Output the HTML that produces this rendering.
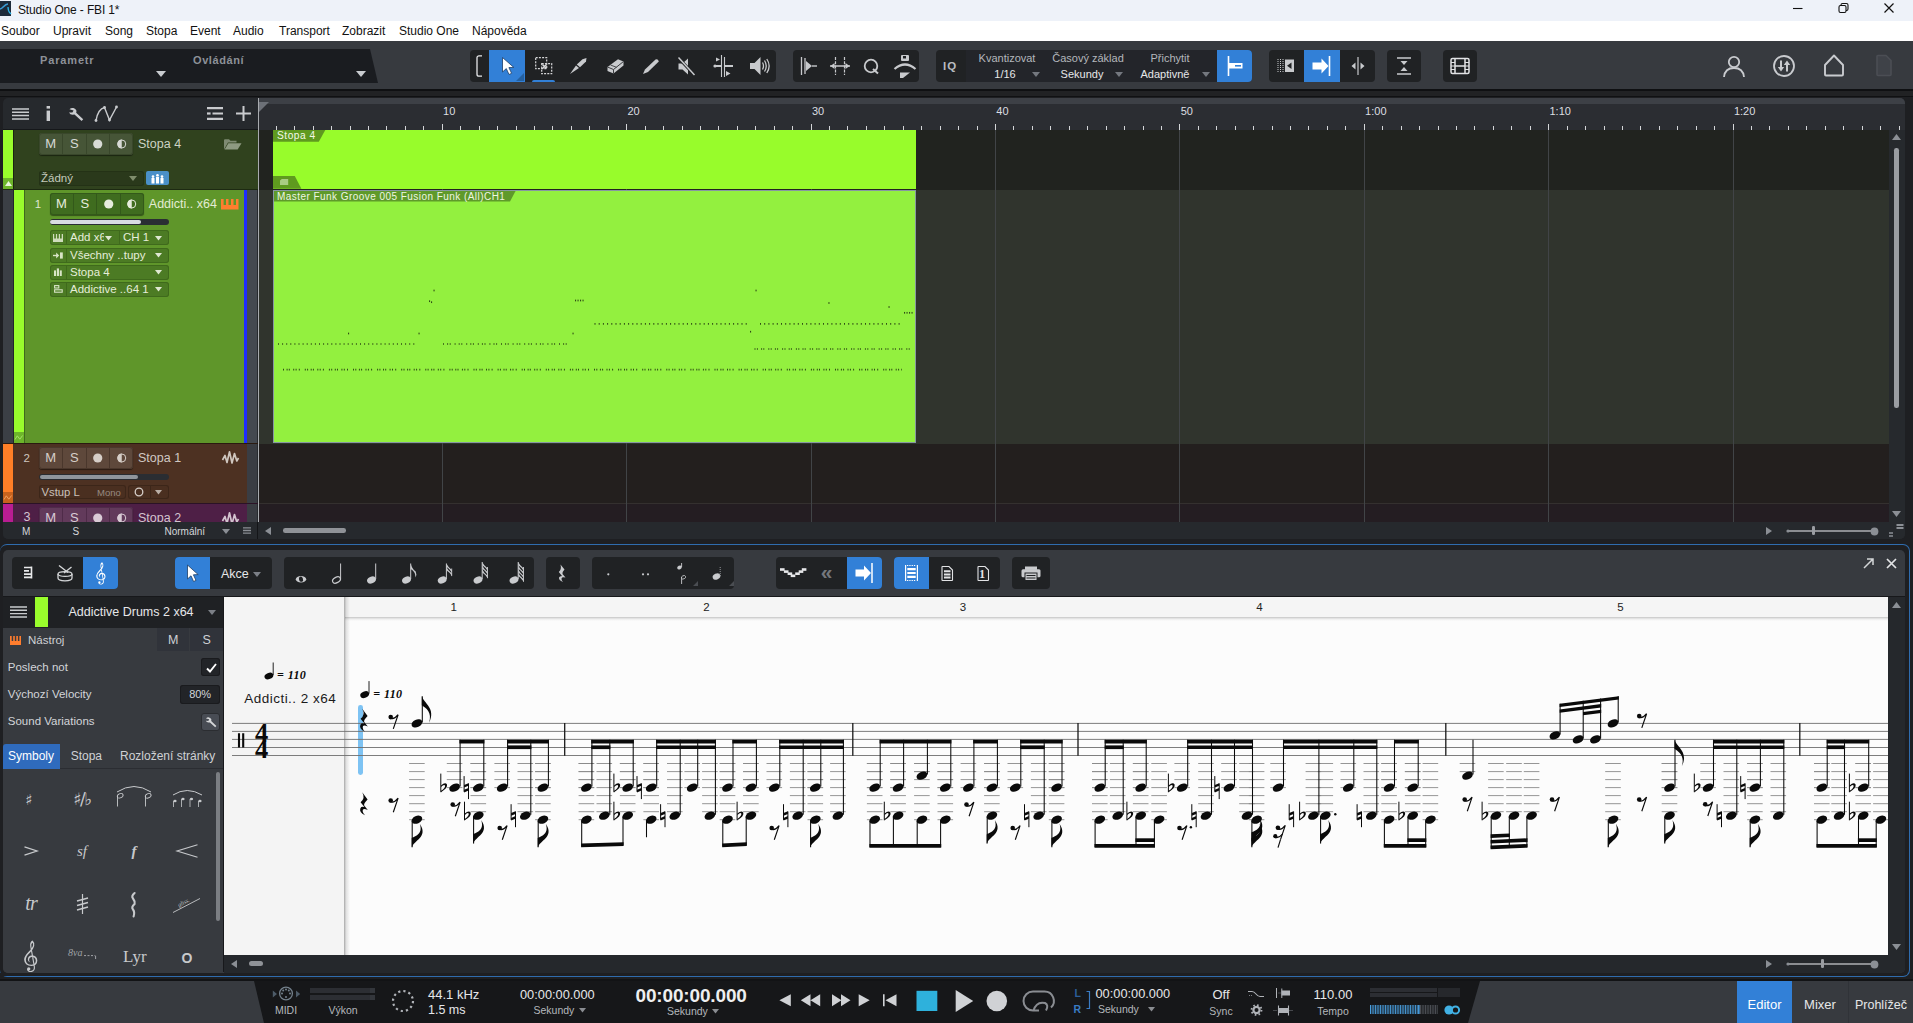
<!DOCTYPE html>
<html lang="cs"><head><meta charset="utf-8"><title>Studio One - FBI 1*</title><style>
*{margin:0;padding:0;box-sizing:border-box}
html,body{width:1913px;height:1023px;overflow:hidden;background:#1e1f22;font-family:"Liberation Sans",sans-serif;}
body{position:relative}
div,svg{position:absolute}
svg{overflow:visible}
.g{background:#202224;border-radius:4px}
.bl{background:#3280d7}
</style></head><body>
<div style="left:0px;top:0px;width:1913px;height:21px;background:#eef2f9;"></div>
<svg style="left:0px;top:1px;" width="12" height="15" viewBox="0 0 12 15"><rect width="11" height="15" fill="#1d2b3a"/><path d="M0 8C3 8 4 3 8 3" stroke="#3a9bd5" stroke-width="1.6" fill="none"/><path d="M8 6C8 11 10 12 11 13" stroke="#2db4e6" stroke-width="1.3" fill="none"/></svg>
<div style="left:18px;top:2px;font-size:12px;color:#111;line-height:14px;white-space:nowrap;line-height:17px;letter-spacing:-.14px">Studio One - FBI 1*</div>
<svg style="left:1785px;top:0px;" width="128" height="20" viewBox="0 0 128 20"><path d="M8 8.5H17.5" stroke="#111" stroke-width="1.1"/><rect x="54" y="5.5" width="7" height="7" rx="1.5" fill="none" stroke="#111" stroke-width="1.1"/><path d="M56 5.5V5A1.5 1.5 0 0 1 57.5 3.5H61.5A1.5 1.5 0 0 1 63 5V9A1.5 1.5 0 0 1 61.5 10.5H61" fill="none" stroke="#111" stroke-width="1.1"/><path d="M99.5 3.5L108.5 12.5M108.5 3.5L99.5 12.5" stroke="#111" stroke-width="1.2"/></svg>
<div style="left:0px;top:21px;width:1913px;height:20px;background:#fff;"></div>
<div style="left:1px;top:23px;font-size:12px;color:#111;line-height:14px;white-space:nowrap;line-height:16px">Soubor</div>
<div style="left:53px;top:23px;font-size:12px;color:#111;line-height:14px;white-space:nowrap;line-height:16px">Upravit</div>
<div style="left:105px;top:23px;font-size:12px;color:#111;line-height:14px;white-space:nowrap;line-height:16px">Song</div>
<div style="left:146px;top:23px;font-size:12px;color:#111;line-height:14px;white-space:nowrap;line-height:16px">Stopa</div>
<div style="left:190px;top:23px;font-size:12px;color:#111;line-height:14px;white-space:nowrap;line-height:16px">Event</div>
<div style="left:233px;top:23px;font-size:12px;color:#111;line-height:14px;white-space:nowrap;line-height:16px">Audio</div>
<div style="left:279px;top:23px;font-size:12px;color:#111;line-height:14px;white-space:nowrap;line-height:16px">Transport</div>
<div style="left:342px;top:23px;font-size:12px;color:#111;line-height:14px;white-space:nowrap;line-height:16px">Zobrazit</div>
<div style="left:399px;top:23px;font-size:12px;color:#111;line-height:14px;white-space:nowrap;line-height:16px">Studio One</div>
<div style="left:472px;top:23px;font-size:12px;color:#111;line-height:14px;white-space:nowrap;line-height:16px">Nápověda</div>
<div style="left:0px;top:41px;width:1913px;height:48px;background:#373a3f;"></div>
<div style="left:0px;top:89px;width:1913px;height:1.6px;background:#0f1012;"></div>
<div style="left:0px;top:90.6px;width:1913px;height:5.6px;background:#212224;"></div>
<div style="left:0px;top:96.2px;width:1913px;height:1.3px;background:#101113;"></div>
<svg style="left:0px;top:49px;" width="380" height="34" viewBox="0 0 380 34"><path d="M0 0H370L378 34H0Z" fill="#1a1c20"/></svg>
<div style="left:40px;top:54px;font-size:11px;color:#8d9198;line-height:13px;white-space:nowrap;font-weight:bold;letter-spacing:.85px">Parametr</div>
<div style="left:193px;top:54px;font-size:11px;color:#8d9198;line-height:13px;white-space:nowrap;font-weight:bold;letter-spacing:.6px">Ovládání</div>
<svg style="left:156px;top:71px;" width="10" height="6" viewBox="0 0 10 6"><path d="M0 0H10L5.0 6Z" fill="#c9ccd0"/></svg>
<svg style="left:356px;top:71px;" width="10" height="6" viewBox="0 0 10 6"><path d="M0 0H10L5.0 6Z" fill="#c9ccd0"/></svg>
<div class="g" style="left:470px;top:50px;width:306px;height:32px;"></div>
<div class="bl" style="left:489px;top:50px;width:36px;height:32px;"></div>
<div style="left:532px;top:80px;width:23px;height:2px;background:#3280d7;border-radius:2px 2px 0 0"></div>
<svg style="left:476px;top:55px;" width="8" height="22" viewBox="0 0 8 22"><path d="M6 .8H3A2 2 0 0 0 1 2.8V19.2A2 2 0 0 0 3 21.2H6" fill="none" stroke="#e6e7e9" stroke-width="1.3"/></svg>
<svg style="left:500px;top:56px;" width="16" height="20" viewBox="0 0 16 20"><path d="M2.5 1.5V16L6.3 12.6L9 18.5L11.6 17.3L8.9 11.6L13.8 11.4Z" fill="#fff" stroke="#1d3d66" stroke-width=".8"/></svg>
<svg style="left:516px;top:73px;" width="8" height="8" viewBox="0 0 8 8"><path d="M8 0V8H0Z" fill="#25609f"/></svg>
<svg style="left:535px;top:57px;" width="18" height="18" viewBox="0 0 18 18"><rect x=".7" y=".7" width="11" height="11" fill="none" stroke="#d6d7d9" stroke-width="1.2" stroke-dasharray="2 1.2"/><rect x="6.7" y="6.7" width="10" height="10" fill="none" stroke="#d6d7d9" stroke-width="1.2" stroke-dasharray="2 1.2"/><path d="M7.5 7.5l4 4m0-4l-4 4" stroke="#d6d7d9" stroke-width="1.6"/></svg>
<svg style="left:569px;top:57px;" width="20" height="18" viewBox="0 0 20 18"><path d="M1 17L7 8.5L10 11Z" fill="#c8cacd"/><path d="M7.8 7.5L13.5 2.2L17.5 1L17 4.5L11 10.2Z" fill="#c8cacd"/></svg>
<svg style="left:606px;top:58px;" width="19" height="17" viewBox="0 0 19 17"><path d="M1.5 9L12 1.2L17.5 3.5L17.5 7.5L7.5 15.5L1.5 13Z" fill="#c8cacd"/><path d="M1.5 9L7.5 11.5L17.5 3.5M7.5 11.5V15.5" stroke="#3b3d40" stroke-width="1" fill="none"/><path d="M4.5 7L10.5 9.3" stroke="#3b3d40" stroke-width=".9"/></svg>
<svg style="left:642px;top:58px;" width="18" height="17" viewBox="0 0 18 17"><path d="M1 16L3 11.5L13.5 1.5Q16 0.5 16.8 3.5L6 14Z" fill="#c8cacd"/></svg>
<svg style="left:677px;top:57px;" width="20" height="19" viewBox="0 0 20 19"><path d="M1.5 6.5H5.5L11 1.5V17.5L5.5 12.5H1.5Z" fill="#c8cacd"/><path d="M1 0.5L18 18.5" stroke="#202224" stroke-width="3"/><path d="M1.5 0.5L17.5 18" stroke="#c8cacd" stroke-width="1.5"/></svg>
<svg style="left:712px;top:55px;" width="22" height="22" viewBox="0 0 22 22"><path d="M9.5 0V22M12.5 2V22" stroke="#c8cacd" stroke-width="1.1"/><path d="M2 11H9M13 11H21" stroke="#c8cacd" stroke-width="2"/><circle cx="3" cy="11" r="1.6" fill="#c8cacd"/><path d="M4 2.5L8 4.5L4 6.5Z M14 16L18.5 18.5L14 21Z" fill="#c8cacd"/></svg>
<svg style="left:749px;top:56px;" width="22" height="20" viewBox="0 0 22 20"><path d="M1 7H5.5L11.5 1V19L5.5 13H1Z" fill="#c8cacd"/><path d="M13.5 6.5Q15.5 10 13.5 13.5M15.5 4.5Q19 10 15.5 15.5M17.8 3Q22.5 10 17.8 17" stroke="#c8cacd" stroke-width="1.3" fill="none"/></svg>
<div class="g" style="left:793px;top:50px;width:126px;height:32px;"></div>
<svg style="left:800px;top:57px;" width="18" height="18" viewBox="0 0 18 18"><path d="M1.5 0V18M5 1V17" stroke="#c8cacd" stroke-width="1.3"/><path d="M6 4L12 9L6 14Z" fill="#c8cacd"/><path d="M12 9H17" stroke="#c8cacd" stroke-width="1.4"/></svg>
<svg style="left:830px;top:57px;" width="20" height="18" viewBox="0 0 20 18"><path d="M5.5 0V18M14.5 0V18" stroke="#c8cacd" stroke-width="1.2" stroke-dasharray="3 1.2"/><path d="M0 9H20" stroke="#c8cacd" stroke-width="1.5"/><path d="M4.5 6L0.5 9L4.5 12ZM15.5 6L19.5 9L15.5 12Z" fill="#c8cacd"/></svg>
<svg style="left:863px;top:57px;" width="18" height="18" viewBox="0 0 18 18"><circle cx="8" cy="9" r="6.3" fill="none" stroke="#c8cacd" stroke-width="1.8"/><path d="M10 12L15 16.5" stroke="#c8cacd" stroke-width="2"/></svg>
<svg style="left:893px;top:54px;" width="24" height="26" viewBox="0 0 24 26"><rect x="8" y="1" width="8" height="6" rx="1" fill="#c8cacd"/><rect x="10" y="2" width="3" height="2.5" fill="#202224"/><path d="M1.5 15Q12 6 22.5 15" stroke="#c8cacd" stroke-width="2.2" fill="none"/><path d="M7 18.5H17L10 24H7Z" fill="#c8cacd"/></svg>
<div class="g" style="left:936px;top:50px;width:316px;height:32px;"></div>
<div style="left:966px;top:50px;width:251px;height:32px;background:#23252a;"></div>
<div style="left:943px;top:59.5px;font-size:11.5px;color:#b9bcc1;line-height:13.5px;white-space:nowrap;letter-spacing:1px;font-weight:bold">IQ</div>
<div style="left:957px;top:51px;font-size:11px;color:#b4b7bc;line-height:13px;white-space:nowrap;width:100px;text-align:center;line-height:14px">Kvantizovat</div>
<div style="left:1038px;top:51px;font-size:11px;color:#b4b7bc;line-height:13px;white-space:nowrap;width:100px;text-align:center;line-height:14px">Časový základ</div>
<div style="left:1120px;top:51px;font-size:11px;color:#b4b7bc;line-height:13px;white-space:nowrap;width:100px;text-align:center;line-height:14px">Přichytit</div>
<div style="left:980px;top:67px;font-size:11px;color:#e6e7e9;line-height:13px;white-space:nowrap;width:50px;text-align:center;line-height:14px">1/16</div>
<div style="left:1052px;top:67px;font-size:11px;color:#e6e7e9;line-height:13px;white-space:nowrap;width:60px;text-align:center;line-height:14px">Sekundy</div>
<div style="left:1130px;top:67px;font-size:11px;color:#e6e7e9;line-height:13px;white-space:nowrap;width:70px;text-align:center;line-height:14px">Adaptivně</div>
<svg style="left:1032px;top:72px;" width="8" height="5" viewBox="0 0 8 5"><path d="M0 0H8L4.0 5Z" fill="#74787f"/></svg>
<svg style="left:1115px;top:72px;" width="8" height="5" viewBox="0 0 8 5"><path d="M0 0H8L4.0 5Z" fill="#74787f"/></svg>
<svg style="left:1202px;top:72px;" width="8" height="5" viewBox="0 0 8 5"><path d="M0 0H8L4.0 5Z" fill="#74787f"/></svg>
<div style="left:1217px;top:50px;width:35px;height:32px;background:#3280d7;border-radius:0 4px 4px 0"></div>
<svg style="left:1226px;top:56px;" width="18" height="20" viewBox="0 0 18 20"><path d="M2.5 0V20" stroke="#fff" stroke-width="1.6"/><rect x="3" y="7" width="13.5" height="5.5" fill="#fff"/><rect x="9" y="9" width="6" height="1.6" fill="#3280d7"/></svg>
<div class="g" style="left:1269px;top:50px;width:106px;height:32px;"></div>
<div class="bl" style="left:1304px;top:50px;width:36px;height:32px;"></div>
<svg style="left:1277px;top:59px;" width="18" height="14" viewBox="0 0 18 14"><path d="M1 0V14M3.5 0V14M6 0V14" stroke="#c8cacd" stroke-width="1" stroke-dasharray="1 1"/><rect x="8" y="0.5" width="9" height="12.5" fill="#c8cacd"/><path d="M14.5 3.5V10L10 6.7Z" fill="#202224"/></svg>
<svg style="left:1312px;top:56px;" width="20" height="20" viewBox="0 0 20 20"><path d="M17.5 0V20" stroke="#fff" stroke-width="1.6"/><path d="M0.5 6.5H9.5V2.5L16.5 10L9.5 17.5V13.5H0.5Z" fill="#fff"/></svg>
<svg style="left:1349px;top:57px;" width="18" height="18" viewBox="0 0 18 18"><path d="M9 0V18" stroke="#c8cacd" stroke-width="1.2"/><path d="M6.5 5.5L2.5 9L6.5 12.5ZM11.5 5.5L15.5 9L11.5 12.5Z" fill="#c8cacd"/></svg>
<div class="g" style="left:1387px;top:50px;width:34px;height:32px;"></div>
<svg style="left:1396px;top:57px;" width="16" height="18" viewBox="0 0 16 18"><path d="M1 1H15M1 17H15" stroke="#c8cacd" stroke-width="1.3"/><path d="M4.5 4H11.5L8 8ZM4.5 14H11.5L8 10Z" fill="#c8cacd"/></svg>
<div class="g" style="left:1443px;top:50px;width:34px;height:32px;"></div>
<svg style="left:1450px;top:57px;" width="20" height="18" viewBox="0 0 20 18"><rect x="1" y="1.5" width="18" height="15" rx="1.5" fill="none" stroke="#e2e3e5" stroke-width="1.5"/><path d="M5 1.5V16.5M15 1.5V16.5M5 9H15" stroke="#e2e3e5" stroke-width="1.5"/><path d="M1 5.5H5M1 9H5M1 12.5H5M15 5.5H19M15 9H19M15 12.5H19" stroke="#e2e3e5" stroke-width="1"/></svg>
<svg style="left:1722px;top:54px;" width="24" height="24" viewBox="0 0 24 24"><circle cx="12" cy="8" r="5.2" fill="none" stroke="#c9cbcf" stroke-width="1.8"/><path d="M2 23Q3 14 12 14Q21 14 22 23" fill="none" stroke="#c9cbcf" stroke-width="1.8"/></svg>
<svg style="left:1772px;top:54px;" width="24" height="24" viewBox="0 0 24 24"><circle cx="12" cy="12" r="10" fill="none" stroke="#c9cbcf" stroke-width="1.8"/><path d="M9 6.5V16M15 17.5V8" stroke="#c9cbcf" stroke-width="2"/><path d="M5.8 13H12.2L9 17.5ZM11.8 11H18.2L15 6.5Z" fill="#c9cbcf"/></svg>
<svg style="left:1823px;top:54px;" width="22" height="24" viewBox="0 0 22 24"><path d="M2 11L11 1.5L20 11V20.5A1 1 0 0 1 19 21.5H3A1 1 0 0 1 2 20.5Z" fill="none" stroke="#c9cbcf" stroke-width="1.9" stroke-linejoin="round"/></svg>
<svg style="left:1875px;top:54px;" width="18" height="24" viewBox="0 0 18 24"><path d="M2 2.5A1 1 0 0 1 3 1.5H11L16 6.5V20.5A1 1 0 0 1 15 21.5H3A1 1 0 0 1 2 20.5Z" fill="#3f4248" stroke="#4b4e54" stroke-width="1.6"/></svg>
<div style="left:3px;top:97.5px;width:1902px;height:441.5px;background:#26292d;border-radius:5px"></div>
<svg style="left:12px;top:108px;" width="17" height="12" viewBox="0 0 17 12"><path d="M0 1H17M0 4.3H17M0 7.6H17M0 11H17" stroke="#c9cbce" stroke-width="1.5"/></svg>
<svg style="left:46px;top:106px;" width="5" height="15" viewBox="0 0 5 15"><rect x="0.6" y="0" width="3.4" height="2.6" fill="#c9cbce"/><rect x="0.6" y="4.6" width="3.4" height="10.4" fill="#c9cbce"/></svg>
<svg style="left:68px;top:106px;" width="16" height="16" viewBox="0 0 16 16"><path d="M1.5 3.2A4.3 4.3 0 0 1 8.5 4.8L8.2 6.8L15.2 13.2L13.6 15L6.5 8.6L4.6 8.8A4.3 4.3 0 0 1 1 6.4L4.4 6.6L5.6 4.4Z" fill="#c9cbce"/></svg>
<svg style="left:94px;top:105px;" width="26" height="17" viewBox="0 0 26 17"><path d="M2 15.5Q4 4 10.5 2.5L15.5 15L22.5 2" fill="none" stroke="#c9cbce" stroke-width="1.4"/><circle cx="2" cy="15.5" r="1.4" fill="#c9cbce"/><circle cx="10.5" cy="2.5" r="1.4" fill="#c9cbce"/><circle cx="15.5" cy="15" r="1.4" fill="#c9cbce"/><circle cx="22.5" cy="2" r="1.4" fill="#c9cbce"/></svg>
<svg style="left:207px;top:107px;" width="16" height="13" viewBox="0 0 16 13"><path d="M0 1.2H16M5.5 6.5H16M0 11.8H16" stroke="#c9cbce" stroke-width="2.2"/><path d="M0 6.5H3.6" stroke="#c9cbce" stroke-width="2.2"/></svg>
<svg style="left:236px;top:106px;" width="15" height="15" viewBox="0 0 15 15"><path d="M7.5 0V15M0 7.5H15" stroke="#c9cbce" stroke-width="2"/></svg>
<div style="left:3px;top:128.5px;width:254.5px;height:1.2px;background:#15171a;"></div>
<div style="left:13px;top:129.7px;width:244.5px;height:59.6px;background:#30421e;"></div>
<div style="left:3px;top:129.7px;width:10.2px;height:48px;background:#99fd2c;"></div>
<div style="left:3px;top:177.5px;width:10.2px;height:11.8px;background:#6db52a;"></div>
<svg style="left:4.5px;top:181px;" width="7" height="5" viewBox="0 0 7 5"><path d="M0 5L3.5 0L7 5Z" fill="#e8f5d8"/></svg>
<div style="left:39px;top:133px;width:94px;height:22px;background:#465537;border-radius:3px;box-shadow:0 1px 1px rgba(0,0,0,.45), inset 0 0 0 1px #39472b"><div style="left:23.0px;top:1px;width:1px;height:20px;background:#39472b"></div><div style="left:46.5px;top:1px;width:1px;height:20px;background:#39472b"></div><div style="left:70.0px;top:1px;width:1px;height:20px;background:#39472b"></div><div style="left:0;top:3px;width:23.5px;text-align:center;font-size:13px;line-height:16px;color:#d8dad6">M</div><div style="left:23.5px;top:3px;width:23.5px;text-align:center;font-size:13px;line-height:16px;color:#d8dad6">S</div><svg style="left:47.0px;top:0" width="23.5" height="22"><circle cx="11.75" cy="11.0" r="4.6" fill="#d8dad6"/></svg><svg style="left:70.5px;top:0" width="23.5" height="22"><circle cx="11.75" cy="11.0" r="4" fill="none" stroke="#d8dad6" stroke-width="1"/><path d="M11.75 6.5A4.5 4.5 0 0 0 11.75 15.5Z" fill="#d8dad6"/></svg></div>
<div style="left:138px;top:136px;font-size:12.5px;color:#ccd2c4;line-height:14.5px;white-space:nowrap;line-height:16px">Stopa 4</div>
<svg style="left:224px;top:139px;" width="18" height="11" viewBox="0 0 18 11"><path d="M0 10.5V1.2Q0 0.3 1 0.3H5L6.5 1.8H12.5V3.5H4L0 10.5Z" fill="#7e8a72"/><path d="M4.4 4.2H17.5L13.6 10.6H0.6Z" fill="#8e9a82"/></svg>
<div style="left:38.5px;top:170.5px;width:105px;height:15px;background:#2a391b;border-radius:3px;box-shadow:inset 0 0 0 1px #243216"></div>
<div style="left:41px;top:170.5px;font-size:11.5px;color:#c3c9bb;line-height:13.5px;white-space:nowrap;line-height:15px">Žádný</div>
<svg style="left:129px;top:176px;" width="8" height="5" viewBox="0 0 8 5"><path d="M0 0H8L4.0 5Z" fill="#7f8d6c"/></svg>
<div style="left:146px;top:171px;width:22.5px;height:14px;background:#4a90c8;border-radius:2px"></div>
<svg style="left:150.5px;top:173.5px;" width="13" height="9.5" viewBox="0 0 13 9.5"><circle cx="2" cy="2.6" r="1.3" fill="#fff"/><rect x=".5" y="4" width="3" height="5.5" fill="#fff"/><circle cx="6.5" cy="1.3" r="1.3" fill="#fff"/><rect x="5" y="2.8" width="3" height="6.7" fill="#fff"/><circle cx="11" cy="2.6" r="1.3" fill="#fff"/><rect x="9.5" y="4" width="3" height="5.5" fill="#fff"/></svg>
<div style="left:3px;top:189.2px;width:254.5px;height:1px;background:#1d2a12;"></div>
<div style="left:13px;top:129.7px;width:0.9px;height:59.5px;background:#1a2410;"></div>
<div style="left:3px;top:190px;width:11px;height:253px;background:#3b3f45;"></div>
<div style="left:14px;top:190px;width:10.3px;height:253px;background:#99fd2c;"></div>
<div style="left:14px;top:432px;width:10.3px;height:11px;background:#6db52a;"></div>
<svg style="left:15px;top:435px;" width="8" height="5" viewBox="0 0 8 5"><path d="M0 4.5L2.3 0.8L4.8 4.2L7.6 0.5" fill="none" stroke="#a5e06a" stroke-width="1"/></svg>
<div style="left:24.3px;top:190px;width:220px;height:253px;background:#5f962a;"></div>
<div style="left:24.1px;top:190px;width:0.9px;height:253px;background:#3f6a1c;"></div>
<div style="left:13.2px;top:190px;width:0.9px;height:253px;background:#23262a;"></div>
<div style="left:244.2px;top:190px;width:2.9px;height:253px;background:#1c2cff;"></div>
<div style="left:247.1px;top:190px;width:10.4px;height:253px;background:#444950;"></div>
<div style="left:34.8px;top:195.5px;font-size:11.5px;color:#dfe8d2;line-height:13.5px;white-space:nowrap;line-height:16px">1</div>
<div style="left:49.6px;top:192.5px;width:94px;height:22px;background:#3f6c1f;border-radius:3px;box-shadow:0 1px 1px rgba(0,0,0,.45), inset 0 0 0 1px #33591a"><div style="left:23.0px;top:1px;width:1px;height:20px;background:#33591a"></div><div style="left:46.5px;top:1px;width:1px;height:20px;background:#33591a"></div><div style="left:70.0px;top:1px;width:1px;height:20px;background:#33591a"></div><div style="left:0;top:3px;width:23.5px;text-align:center;font-size:13px;line-height:16px;color:#e6ecdd">M</div><div style="left:23.5px;top:3px;width:23.5px;text-align:center;font-size:13px;line-height:16px;color:#e6ecdd">S</div><svg style="left:47.0px;top:0" width="23.5" height="22"><circle cx="11.75" cy="11.0" r="4.6" fill="#e6ecdd"/></svg><svg style="left:70.5px;top:0" width="23.5" height="22"><circle cx="11.75" cy="11.0" r="4" fill="none" stroke="#e6ecdd" stroke-width="1"/><path d="M11.75 6.5A4.5 4.5 0 0 0 11.75 15.5Z" fill="#e6ecdd"/></svg></div>
<div style="left:148.8px;top:195.5px;font-size:12.5px;color:#e3ecd4;line-height:14.5px;white-space:nowrap;line-height:16px">Addicti.. x64</div>
<svg style="left:221px;top:199px;" width="17.5" height="10.5" viewBox="0 0 17.5 10.5"><path d="M0 0H2.6V6H5V0H7.5V6H10V0H12.5V6H15V0H17.5V10.5H0Z" fill="#ff7d2e"/></svg>
<div style="left:49.6px;top:219.2px;width:119.6px;height:5.8px;background:#2a2e33;border-radius:3px"></div>
<div style="left:50.4px;top:220px;width:91px;height:4.2px;background:#d9dde1;border-radius:2.2px"></div>
<div style="left:49.6px;top:230.3px;width:119.6px;height:15px;background:#4c7b24;border-radius:3px;box-shadow:inset 0 0 0 1px #3f6a1c"></div>
<div style="left:66px;top:231.3px;width:1px;height:13px;background:#3f6a1c;"></div>
<div style="left:70px;top:230.3px;width:38px;height:15px;overflow:hidden"><div style="left:0;top:0;font-size:11.5px;line-height:15px;color:#e6eeda;white-space:nowrap">Add x6</div></div>
<div style="left:104px;top:231.3px;width:5px;height:13px;background:#4c7b24;"></div>
<div style="left:118.6px;top:231.3px;width:1px;height:13px;background:#3f6a1c;"></div>
<div style="left:123px;top:230.3px;font-size:11.5px;color:#e6eeda;line-height:13.5px;white-space:nowrap;line-height:15px">CH 1</div>
<svg style="left:104.5px;top:235.8px;" width="7" height="4.5" viewBox="0 0 7 4.5"><path d="M0 0H7L3.5 4.5Z" fill="#dfe8d2"/></svg>
<svg style="left:154.5px;top:235.8px;" width="7" height="4.5" viewBox="0 0 7 4.5"><path d="M0 0H7L3.5 4.5Z" fill="#dfe8d2"/></svg>
<div style="left:49.6px;top:247.5px;width:119.6px;height:15px;background:#4c7b24;border-radius:3px;box-shadow:inset 0 0 0 1px #3f6a1c"></div>
<div style="left:66px;top:248.5px;width:1px;height:13px;background:#3f6a1c;"></div>
<div style="left:70px;top:247.5px;font-size:11.5px;color:#e6eeda;line-height:13.5px;white-space:nowrap;line-height:15px">Všechny ..tupy</div>
<svg style="left:154.5px;top:253.0px;" width="7" height="4.5" viewBox="0 0 7 4.5"><path d="M0 0H7L3.5 4.5Z" fill="#dfe8d2"/></svg>
<div style="left:49.6px;top:264.7px;width:119.6px;height:15px;background:#4c7b24;border-radius:3px;box-shadow:inset 0 0 0 1px #3f6a1c"></div>
<div style="left:66px;top:265.7px;width:1px;height:13px;background:#3f6a1c;"></div>
<div style="left:70px;top:264.7px;font-size:11.5px;color:#e6eeda;line-height:13.5px;white-space:nowrap;line-height:15px">Stopa 4</div>
<svg style="left:154.5px;top:270.2px;" width="7" height="4.5" viewBox="0 0 7 4.5"><path d="M0 0H7L3.5 4.5Z" fill="#dfe8d2"/></svg>
<div style="left:49.6px;top:281.8px;width:119.6px;height:15px;background:#4c7b24;border-radius:3px;box-shadow:inset 0 0 0 1px #3f6a1c"></div>
<div style="left:66px;top:282.8px;width:1px;height:13px;background:#3f6a1c;"></div>
<div style="left:70px;top:281.8px;font-size:11.5px;color:#e6eeda;line-height:13.5px;white-space:nowrap;line-height:15px">Addictive ..64 1</div>
<svg style="left:154.5px;top:287.3px;" width="7" height="4.5" viewBox="0 0 7 4.5"><path d="M0 0H7L3.5 4.5Z" fill="#dfe8d2"/></svg>
<svg style="left:53px;top:233.5px;" width="10" height="8" viewBox="0 0 10 8"><path d="M0 8V0H1.2V4.6H2.9V0H4.1V4.6H5.8V0H7V4.6H8.7V0H10V8Z" fill="#cfdcbc"/></svg>
<svg style="left:53px;top:251.5px;" width="10" height="7" viewBox="0 0 10 7"><path d="M0 3.5H4.5" stroke="#d8e4c6" stroke-width="1.4"/><path d="M3.2 0.6L6.2 3.5L3.2 6.4Z" fill="#d8e4c6"/><rect x="7" y="0.4" width="2.8" height="6.2" fill="#d8e4c6"/></svg>
<svg style="left:54px;top:267.5px;" width="8" height="8" viewBox="0 0 8 8"><rect x="0" y="2.4" width="2" height="5.6" fill="#d8e4c6"/><rect x="2.8" y="0.4" width="2.2" height="7.6" fill="#d8e4c6"/><rect x="5.8" y="2.4" width="2" height="5.6" fill="#d8e4c6"/></svg>
<svg style="left:54px;top:285px;" width="9" height="8" viewBox="0 0 9 8"><rect x=".6" y=".6" width="4.2" height="2.4" fill="none" stroke="#d8e4c6" stroke-width="1.1"/><rect x=".6" y="4.8" width="7.6" height="2.4" fill="none" stroke="#d8e4c6" stroke-width="1.1"/></svg>
<div style="left:3px;top:443.3px;width:254.5px;height:1px;background:#2a1a10;"></div>
<div style="left:13px;top:444px;width:234.5px;height:59.3px;background:#4d3122;"></div>
<div style="left:247.3px;top:444px;width:10.2px;height:59.3px;background:#3a3d43;"></div>
<div style="left:3px;top:444px;width:10.2px;height:48px;background:#ff7f27;"></div>
<div style="left:3px;top:491.6px;width:10.2px;height:11.7px;background:#c8621d;"></div>
<svg style="left:4px;top:495px;" width="8" height="5" viewBox="0 0 8 5"><path d="M0 4.5L2.3 0.8L4.8 4.2L7.6 0.5" fill="none" stroke="#f0a060" stroke-width="1"/></svg>
<div style="left:23.5px;top:449.5px;font-size:11.5px;color:#cfc6bf;line-height:13.5px;white-space:nowrap;line-height:16px">2</div>
<div style="left:39px;top:446.5px;width:94px;height:22px;background:#5e483b;border-radius:3px;box-shadow:0 1px 1px rgba(0,0,0,.45), inset 0 0 0 1px #4a372c"><div style="left:23.0px;top:1px;width:1px;height:20px;background:#4a372c"></div><div style="left:46.5px;top:1px;width:1px;height:20px;background:#4a372c"></div><div style="left:70.0px;top:1px;width:1px;height:20px;background:#4a372c"></div><div style="left:0;top:3px;width:23.5px;text-align:center;font-size:13px;line-height:16px;color:#d6cec8">M</div><div style="left:23.5px;top:3px;width:23.5px;text-align:center;font-size:13px;line-height:16px;color:#d6cec8">S</div><svg style="left:47.0px;top:0" width="23.5" height="22"><circle cx="11.75" cy="11.0" r="4.6" fill="#d6cec8"/></svg><svg style="left:70.5px;top:0" width="23.5" height="22"><circle cx="11.75" cy="11.0" r="4" fill="none" stroke="#d6cec8" stroke-width="1"/><path d="M11.75 6.5A4.5 4.5 0 0 0 11.75 15.5Z" fill="#d6cec8"/></svg></div>
<div style="left:138px;top:449.5px;font-size:12.5px;color:#d0c8c2;line-height:14.5px;white-space:nowrap;line-height:16px">Stopa 1</div>
<svg style="left:221.5px;top:451px;" width="17" height="13" viewBox="0 0 17 13"><path d="M0.5 9L3 4.5L5 11.5L7.5 0.8L10 12L12.5 2.5L14.8 10L16.5 7" fill="none" stroke="#cfc6bf" stroke-width="1.7" stroke-linejoin="round"/></svg>
<div style="left:39px;top:474.3px;width:130px;height:5.6px;background:#2a2d32;border-radius:3px"></div>
<div style="left:39.8px;top:475.1px;width:98px;height:4px;background:#8f959c;border-radius:2px"></div>
<div style="left:39px;top:484.6px;width:86.6px;height:14.8px;background:#4a2f20;border-radius:3px;box-shadow:inset 0 0 0 1px #3c2619"></div>
<div style="left:41.5px;top:484.6px;font-size:11.3px;color:#c9c0ba;line-height:13.3px;white-space:nowrap;line-height:15px">Vstup L</div>
<div style="left:97px;top:485.6px;font-size:9.5px;color:#978a80;line-height:11.5px;white-space:nowrap;line-height:13px">Mono</div>
<div style="left:127.8px;top:484.6px;width:41.2px;height:14.8px;background:#4a2f20;border-radius:3px;box-shadow:inset 0 0 0 1px #3c2619"></div>
<div style="left:150.3px;top:485.6px;width:1px;height:12.8px;background:#3c2619;"></div>
<svg style="left:134px;top:487px;" width="10" height="10" viewBox="0 0 10 10"><circle cx="5" cy="5" r="3.8" fill="none" stroke="#d6cec8" stroke-width="1.3"/></svg>
<svg style="left:154.5px;top:490px;" width="7" height="4.5" viewBox="0 0 7 4.5"><path d="M0 0H7L3.5 4.5Z" fill="#b9aea6"/></svg>
<div style="left:3px;top:503.3px;width:254.5px;height:1px;background:#2b1226;"></div>
<div style="left:13px;top:504.2px;width:234.5px;height:18px;background:#4e1f46;"></div>
<div style="left:247.3px;top:504.2px;width:10.2px;height:18px;background:#3a3d43;"></div>
<div style="left:3px;top:504.2px;width:10.2px;height:18px;background:#b91d92;"></div>
<div style="left:13px;top:504.2px;width:244.5px;height:18px;overflow:hidden"><div style="left:10.5px;top:5px;font-size:12.5px;line-height:16px;color:#d3c3cf">3</div><div style="left:26px;top:3px;width:94px;height:22px;background:#623a5b;border-radius:3px;box-shadow:0 1px 1px rgba(0,0,0,.45), inset 0 0 0 1px #4f2b49"><div style="left:23.0px;top:1px;width:1px;height:20px;background:#4f2b49"></div><div style="left:46.5px;top:1px;width:1px;height:20px;background:#4f2b49"></div><div style="left:70.0px;top:1px;width:1px;height:20px;background:#4f2b49"></div><div style="left:0;top:3px;width:23.5px;text-align:center;font-size:13px;line-height:16px;color:#d9cbd5">M</div><div style="left:23.5px;top:3px;width:23.5px;text-align:center;font-size:13px;line-height:16px;color:#d9cbd5">S</div><svg style="left:47.0px;top:0" width="23.5" height="22"><circle cx="11.75" cy="11.0" r="4.6" fill="#d9cbd5"/></svg><svg style="left:70.5px;top:0" width="23.5" height="22"><circle cx="11.75" cy="11.0" r="4" fill="none" stroke="#d9cbd5" stroke-width="1"/><path d="M11.75 6.5A4.5 4.5 0 0 0 11.75 15.5Z" fill="#d9cbd5"/></svg></div><div style="left:125px;top:6px;font-size:12.5px;line-height:16px;color:#d3c3cf;white-space:nowrap">Stopa 2</div><svg style="left:208.5px;top:7.5px;" width="17" height="13" viewBox="0 0 17 13"><path d="M0.5 9L3 4.5L5 11.5L7.5 0.8L10 12L12.5 2.5L14.8 10L16.5 7" fill="none" stroke="#d3c3cf" stroke-width="1.7" stroke-linejoin="round"/></svg></div>
<div style="left:3px;top:522.2px;width:254.5px;height:17px;background:#26292d;border-radius:0 0 0 5px"></div>
<div style="left:257.2px;top:522.2px;width:1px;height:16.8px;background:#141518;"></div>
<div style="left:22px;top:525px;font-size:10px;color:#d5d7da;line-height:12px;white-space:nowrap;line-height:13px">M</div>
<div style="left:72.5px;top:525px;font-size:10px;color:#d5d7da;line-height:12px;white-space:nowrap;line-height:13px">S</div>
<div style="left:164.5px;top:524.5px;font-size:10px;color:#d5d7da;line-height:12px;white-space:nowrap;line-height:13px">Normální</div>
<svg style="left:222px;top:529px;" width="8" height="5" viewBox="0 0 8 5"><path d="M0 0H8L4.0 5Z" fill="#8a8e94"/></svg>
<svg style="left:243px;top:526.5px;" width="8" height="7" viewBox="0 0 8 7"><path d="M0 .8H8M0 3.5H8M0 6.2H8" stroke="#8a8e94" stroke-width="1.3"/></svg>
<div style="left:257.7px;top:97.5px;width:1.5px;height:424.7px;background:#a8abaf;"></div>
<div style="left:259.2px;top:97.5px;width:1645.8px;height:6.5px;background:#3d4046;border-radius:0 5px 0 0"></div>
<div style="left:259.2px;top:104px;width:1645.8px;height:25.5px;background:#2b2d32;"></div>
<svg style="left:259.3px;top:102.3px;" width="10" height="10" viewBox="0 0 10 10"><path d="M0 0H10L0 10Z" fill="#6c7077"/></svg>
<svg style="left:0px;top:0px;" width="1913" height="130" viewBox="0 0 1913 130"><path d="M276.5 126V130M294.5 126V130M313.5 126V130M331.5 126V130M350.5 126V130M368.5 126V130M386.5 126V130M405.5 126V130M423.5 126V130M442.5 124V130M460.5 126V130M479.5 126V130M497.5 126V130M516.5 126V130M534.5 126V130M552.5 126V130M571.5 126V130M589.5 126V130M608.5 126V130M626.5 124V130M645.5 126V130M663.5 126V130M682.5 126V130M700.5 126V130M718.5 126V130M737.5 126V130M755.5 126V130M774.5 126V130M792.5 126V130M811.5 124V130M829.5 126V130M847.5 126V130M866.5 126V130M884.5 126V130M903.5 126V130M921.5 126V130M940.5 126V130M958.5 126V130M977.5 126V130M995.5 124V130M1013.5 126V130M1032.5 126V130M1050.5 126V130M1069.5 126V130M1087.5 126V130M1106.5 126V130M1124.5 126V130M1143.5 126V130M1161.5 126V130M1179.5 124V130M1198.5 126V130M1216.5 126V130M1235.5 126V130M1253.5 126V130M1272.5 126V130M1290.5 126V130M1308.5 126V130M1327.5 126V130M1345.5 126V130M1364.5 124V130M1382.5 126V130M1401.5 126V130M1419.5 126V130M1438.5 126V130M1456.5 126V130M1474.5 126V130M1493.5 126V130M1511.5 126V130M1530.5 126V130M1548.5 124V130M1567.5 126V130M1585.5 126V130M1604.5 126V130M1622.5 126V130M1640.5 126V130M1659.5 126V130M1677.5 126V130M1696.5 126V130M1714.5 126V130M1733.5 124V130M1751.5 126V130M1769.5 126V130M1788.5 126V130M1806.5 126V130M1825.5 126V130M1843.5 126V130M1862.5 126V130M1880.5 126V130M1899.5 126V130" stroke="#d4d6d8" stroke-width="1"/></svg>
<div style="left:443.09999999999997px;top:104.5px;font-size:11px;color:#dcdee1;line-height:13px;white-space:nowrap;line-height:13px">10</div>
<div style="left:627.5px;top:104.5px;font-size:11px;color:#dcdee1;line-height:13px;white-space:nowrap;line-height:13px">20</div>
<div style="left:811.9px;top:104.5px;font-size:11px;color:#dcdee1;line-height:13px;white-space:nowrap;line-height:13px">30</div>
<div style="left:996.3px;top:104.5px;font-size:11px;color:#dcdee1;line-height:13px;white-space:nowrap;line-height:13px">40</div>
<div style="left:1180.7px;top:104.5px;font-size:11px;color:#dcdee1;line-height:13px;white-space:nowrap;line-height:13px">50</div>
<div style="left:1365.1000000000001px;top:104.5px;font-size:11px;color:#dcdee1;line-height:13px;white-space:nowrap;line-height:13px">1:00</div>
<div style="left:1549.5000000000002px;top:104.5px;font-size:11px;color:#dcdee1;line-height:13px;white-space:nowrap;line-height:13px">1:10</div>
<div style="left:1733.8999999999999px;top:104.5px;font-size:11px;color:#dcdee1;line-height:13px;white-space:nowrap;line-height:13px">1:20</div>
<div style="left:259.2px;top:129.5px;width:1629.5px;height:60px;background:#21231f;"></div>
<div style="left:259.2px;top:189.5px;width:1629.5px;height:254px;background:#30342d;"></div>
<div style="left:259.2px;top:443.5px;width:1629.5px;height:60px;background:#231f1e;"></div>
<div style="left:259.2px;top:503.5px;width:1629.5px;height:18.7px;background:#241d22;"></div>
<div style="left:259.2px;top:503px;width:1629.5px;height:1px;background:#34302f;"></div>
<svg style="left:0px;top:0px;" width="1913" height="523" viewBox="0 0 1913 523"><path d="M442.5 130V522M626.5 130V522M811.5 130V522M995.5 130V522M1179.5 130V522M1364.5 130V522M1548.5 130V522M1733.5 130V522" stroke="#414447" stroke-width="1"/></svg>
<div style="left:273px;top:130px;width:643.2px;height:59px;background:#98fc2b;"></div>
<svg style="left:273px;top:130px;" width="54" height="12" viewBox="0 0 54 12"><path d="M0 0H52.3L45.8 11.8H0Z" fill="#5f9a1f"/></svg>
<div style="left:277px;top:129.7px;font-size:10.2px;color:#f2f8e8;line-height:12.2px;white-space:nowrap;line-height:12px;letter-spacing:.5px">Stopa 4</div>
<svg style="left:273px;top:176.3px;" width="30" height="13" viewBox="0 0 30 13"><path d="M0 0H21.8L28.4 12.7H0Z" fill="#5f9a1f"/></svg>
<svg style="left:279.5px;top:179.2px;" width="9" height="6" viewBox="0 0 9 6"><path d="M0 6V1.5L1.8 0H8.2V6Z" fill="#a9cc82"/></svg>
<div style="left:273px;top:190px;width:643.2px;height:253px;background:#93f03f;box-shadow:inset 0 0 0 1px #8797a2"></div>
<svg style="left:274px;top:191px;" width="244" height="11" viewBox="0 0 244 11"><path d="M0 0H241.6L236 10.6H0Z" fill="#5f9a2a"/></svg>
<div style="left:277px;top:190.5px;font-size:10px;color:#eef6e2;line-height:12px;white-space:nowrap;line-height:12px;letter-spacing:.45px">Master Funk Groove 005 Fusion Funk (All)CH1</div>
<svg style="left:0px;top:0px;" width="1913" height="523" viewBox="0 0 1913 523"><path d="M283 369.6H902" stroke="#2f4c16" stroke-width="1.7" stroke-dasharray="1 2.6 1 1.2 1 3.4 1 1.4 1 2.2 1 5 1 1.3"/><path d="M278 344H415" stroke="#2f4c16" stroke-width="1.7" stroke-dasharray="1 3.1"/><path d="M443 344H570" stroke="#2f4c16" stroke-width="1.7" stroke-dasharray="1 3.1 1 1.6 1 3.9"/><path d="M594.5 323.8H747" stroke="#2f4c16" stroke-width="1.7" stroke-dasharray="1 3.2"/><path d="M760 323.8H902" stroke="#2f4c16" stroke-width="1.7" stroke-dasharray="1 3.2"/><path d="M754.5 349H912.5" stroke="#2f4c16" stroke-width="1.7" stroke-dasharray="1 1.4 1 3.2 1 1.2 1 4"/><rect x="433.5" y="289.65" width="1.1" height="1.7" fill="#2f4c16"/><rect x="429" y="300.34999999999997" width="1.1" height="1.7" fill="#2f4c16"/><rect x="431" y="301.34999999999997" width="1.1" height="1.7" fill="#2f4c16"/><rect x="575" y="299.65" width="1.1" height="1.7" fill="#2f4c16"/><rect x="577.5" y="299.65" width="1.1" height="1.7" fill="#2f4c16"/><rect x="580" y="299.65" width="1.1" height="1.7" fill="#2f4c16"/><rect x="582.5" y="299.65" width="1.1" height="1.7" fill="#2f4c16"/><rect x="755.5" y="289.65" width="1.1" height="1.7" fill="#2f4c16"/><rect x="828.4" y="302.15" width="1.1" height="1.7" fill="#2f4c16"/><rect x="888.5" y="306.15" width="1.1" height="1.7" fill="#2f4c16"/><rect x="904" y="311.95" width="1.1" height="1.7" fill="#2f4c16"/><rect x="906.5" y="311.95" width="1.1" height="1.7" fill="#2f4c16"/><rect x="909" y="311.95" width="1.1" height="1.7" fill="#2f4c16"/><rect x="911.5" y="311.95" width="1.1" height="1.7" fill="#2f4c16"/><rect x="348" y="332.65" width="1.1" height="1.7" fill="#2f4c16"/><rect x="418.5" y="332.65" width="1.1" height="1.7" fill="#2f4c16"/><rect x="572.5" y="332.65" width="1.1" height="1.7" fill="#2f4c16"/><rect x="750" y="330.84999999999997" width="1.1" height="1.7" fill="#2f4c16"/></svg>
<div style="left:1888.7px;top:129.5px;width:16.3px;height:392.7px;background:#26292d;"></div>
<svg style="left:1892px;top:133.5px;" width="9" height="6" viewBox="0 0 9 6"><path d="M0 6L4.5 0L9 6Z" fill="#8b8f95"/></svg>
<div style="left:1894.3px;top:148px;width:4.6px;height:260px;background:#9a9da2;border-radius:2.3px"></div>
<svg style="left:1892px;top:510.5px;" width="9" height="6" viewBox="0 0 9 6"><path d="M0 0H9L4.5 6Z" fill="#8b8f95"/></svg>
<div style="left:259.2px;top:522.2px;width:1645.8px;height:16.8px;background:#26292d;border-radius:0 0 5px 0"></div>
<svg style="left:265px;top:526.5px;" width="6" height="8" viewBox="0 0 6 8"><path d="M6 0V8L0 4Z" fill="#8b8f95"/></svg>
<div style="left:282.5px;top:528.2px;width:63px;height:4.6px;background:#8f9297;border-radius:2.3px"></div>
<svg style="left:1766px;top:526.5px;" width="6" height="8" viewBox="0 0 6 8"><path d="M0 0V8L6 4Z" fill="#8b8f95"/></svg>
<div style="left:1787px;top:529.5px;width:90px;height:2px;background:#8b8d91;"></div>
<svg style="left:1785.5px;top:528.5px;" width="4" height="4" viewBox="0 0 4 4"><circle cx="2" cy="2" r="1.6" fill="#8b8f95"/></svg>
<div style="left:1811.5px;top:526px;width:3.2px;height:9.2px;background:#9a9da2;border-radius:1.2px"></div>
<svg style="left:1869.5px;top:526.5px;" width="9" height="9" viewBox="0 0 9 9"><circle cx="4.5" cy="4.5" r="3.9" fill="#8b8f95"/></svg>
<svg style="left:1888px;top:524px;" width="16" height="14" viewBox="0 0 16 14"><path d="M8.5 1H15.5M8.5 4H15.5" stroke="#8b8f95" stroke-width="1.8"/><path d="M1 9H5M1 12H5" stroke="#8b8f95" stroke-width="1.3"/></svg>
<div style="left:0px;top:544px;width:1910px;height:433px;border:1.3px solid #2f6cae;border-radius:7px;border-left:none"></div>
<div style="left:3px;top:549.5px;width:1902px;height:423px;background:#373a3f;border-radius:5px"></div>
<div style="left:3px;top:595.5px;width:1902px;height:1.3px;background:#17181b;"></div>
<div class="g" style="left:12px;top:557px;width:106px;height:32px;"></div>
<div style="left:83px;top:557px;width:35px;height:32px;background:#3280d7;border-radius:0 4px 4px 0"></div>
<svg style="left:24px;top:566px;" width="9" height="13" viewBox="0 0 9 13"><path d="M7.5 0.5V12.5" stroke="#e8e9ea" stroke-width="1.6"/><path d="M0 1.5H7M0 4.8H5M0 8.1H7M0 11.4H7" stroke="#e8e9ea" stroke-width="1.7"/></svg>
<svg style="left:56px;top:564px;" width="18" height="18" viewBox="0 0 18 18"><path d="M3 1.5L12 8.5M15.5 3L8 9" stroke="#d4d6d8" stroke-width="1.4"/><ellipse cx="9" cy="10" rx="7" ry="2.4" fill="none" stroke="#d4d6d8" stroke-width="1.3"/><path d="M2 10V14Q2 16.8 9 16.8Q16 16.8 16 14V10" fill="none" stroke="#d4d6d8" stroke-width="1.3"/></svg>
<svg style="left:94px;top:562px;" width="14" height="23" viewBox="0 0 14 23"><g transform="scale(1.0)"><path d="M7.6 22.5Q4.5 23 4.2 20.6Q4.2 19.2 5.6 19.2Q6.8 19.4 6.6 20.6Q6.3 21.4 5.4 21.3Q6 22 7.4 21.7Q9.3 21.2 9 18.8L6.5 4.5Q6 1.2 8.2 0.3Q9.7 1.6 9.3 4.3Q8.9 6.5 6.3 9Q3.4 11.6 3.4 14Q3.6 17.3 7.3 17.4Q10.6 17.2 10.4 14.3Q10 12 7.7 12Q5.7 12.2 5.7 14.2Q5.8 15.4 6.9 15.8Q5 15.6 4.8 13.6Q4.9 11 7.7 10.7Q11.3 10.8 11.5 14.4Q11.4 18 7.5 18.3Q2.4 18.2 2.2 13.8Q2.3 11.2 5.2 8.4Q8.3 5.6 8.5 3.6Q8.6 2.2 8 1.9Q7 2.6 7.3 4.6L9.8 18.7Q10.2 21.8 7.6 22.5Z" fill="#fff"/></g></svg>
<div class="g" style="left:175px;top:557px;width:97px;height:32px;"></div>
<div style="left:175px;top:557px;width:35px;height:32px;background:#3280d7;border-radius:4px 0 0 4px"></div>
<svg style="left:186px;top:564px;" width="14" height="19" viewBox="0 0 14 19"><path d="M1.5 1V15L5 11.8L7.6 17.5L10 16.4L7.4 10.8L12.2 10.6Z" fill="#fff" stroke="#1d3d66" stroke-width=".8"/></svg>
<div style="left:221px;top:565.5px;font-size:12.5px;color:#e6e7e9;line-height:14.5px;white-space:nowrap;line-height:16px">Akce</div>
<svg style="left:253px;top:572px;" width="8" height="5" viewBox="0 0 8 5"><path d="M0 0H8L4.0 5Z" fill="#7c8087"/></svg>
<div class="g" style="left:284px;top:557px;width:250px;height:32px;"></div>
<svg style="left:0px;top:0px;" width="1913" height="600" viewBox="0 0 1913 600"><ellipse cx="301" cy="579.2" rx="5.2" ry="3.2" fill="#c9cbce"/><ellipse cx="301" cy="579.2" rx="2" ry="2.6" fill="#202224" transform="rotate(-20 301 579.2)"/><ellipse cx="336.5" cy="580" rx="4.2" ry="2.7" fill="none" stroke="#c9cbce" stroke-width="1.2" transform="rotate(-28 336.5 580)"/><path d="M340.6 579V563.5" stroke="#c9cbce" stroke-width="1"/><ellipse cx="371.5" cy="580" rx="4.6" ry="3.3" fill="#c9cbce" transform="rotate(-25 371.5 580)"/><path d="M375.7 579V563.5" stroke="#c9cbce" stroke-width="1"/><ellipse cx="406.5" cy="580" rx="4.6" ry="3.3" fill="#c9cbce" transform="rotate(-25 406.5 580)"/><path d="M410.7 579V563.5" stroke="#c9cbce" stroke-width="1"/><path d="M410.7 563.5Q411.7 568.5 415.7 571.5Q417.2 574.5 415.2 577.5Q416.2 572.5 410.7 569.0Z" fill="#c9cbce"/><ellipse cx="442.2" cy="580" rx="4.6" ry="3.3" fill="#c9cbce" transform="rotate(-25 442.2 580)"/><path d="M446.4 579V563.5" stroke="#c9cbce" stroke-width="1"/><path d="M446.4 563.5Q447.9 567.0 451.9 570.0L451.9 572.5Q449.4 568.5 446.4 566.7Z" fill="#c9cbce"/><path d="M446.4 567.1Q447.9 570.6 451.9 573.6L451.9 576.1Q449.4 572.1 446.4 570.3000000000001Z" fill="#c9cbce"/><path d="M451.7 568.5V576.1" stroke="#c9cbce" stroke-width=".9"/><ellipse cx="478" cy="580" rx="4.6" ry="3.3" fill="#c9cbce" transform="rotate(-25 478 580)"/><path d="M482.2 579V562" stroke="#c9cbce" stroke-width="1"/><path d="M482.2 562.0Q483.7 565.5 487.7 568.5L487.7 571.0Q485.2 567.0 482.2 565.2Z" fill="#c9cbce"/><path d="M482.2 565.6Q483.7 569.1 487.7 572.1L487.7 574.6Q485.2 570.6 482.2 568.8000000000001Z" fill="#c9cbce"/><path d="M482.2 569.2Q483.7 572.7 487.7 575.7L487.7 578.2Q485.2 574.2 482.2 572.4000000000001Z" fill="#c9cbce"/><path d="M487.5 567V578.2" stroke="#c9cbce" stroke-width=".9"/><ellipse cx="514" cy="580" rx="4.6" ry="3.3" fill="#c9cbce" transform="rotate(-25 514 580)"/><path d="M518.2 579V562" stroke="#c9cbce" stroke-width="1"/><path d="M518.2 562.0Q519.7 565.5 523.7 568.5L523.7 571.0Q521.2 567.0 518.2 565.2Z" fill="#c9cbce"/><path d="M518.2 565.6Q519.7 569.1 523.7 572.1L523.7 574.6Q521.2 570.6 518.2 568.8000000000001Z" fill="#c9cbce"/><path d="M518.2 569.2Q519.7 572.7 523.7 575.7L523.7 578.2Q521.2 574.2 518.2 572.4000000000001Z" fill="#c9cbce"/><path d="M518.2 572.8Q519.7 576.3 523.7 579.3L523.7 581.8Q521.2 577.8 518.2 576.0Z" fill="#c9cbce"/><path d="M523.5 567V581.8" stroke="#c9cbce" stroke-width=".9"/></svg>
<div class="g" style="left:546px;top:557px;width:34px;height:32px;"></div>
<svg style="left:557px;top:564px;" width="10" height="19" viewBox="0 0 10 19"><path d="M3.5 0.5L7.5 5.5Q5 8 5.5 10L8.5 13.5Q5 12.5 4.5 14.5Q4.3 16 6 18Q1.5 16 2 13.5Q2.5 12 5 12L1.8 8Q4.8 5.5 3.5 0.5Z" fill="#c9cbce"/></svg>
<div class="g" style="left:592px;top:557px;width:142px;height:32px;"></div>
<svg style="left:0px;top:0px;" width="1913" height="600" viewBox="0 0 1913 600"><circle cx="608.3" cy="574.3" r="1.1" fill="#c9cbce"/><circle cx="643" cy="574.3" r="1.1" fill="#c9cbce"/><circle cx="648" cy="574.3" r="1.1" fill="#c9cbce"/><ellipse cx="679.5" cy="567.5" rx="2.4" ry="1.8" fill="#c9cbce" transform="rotate(-25 679.5 567.5)"/><path d="M681.6 567V563M681.6 577V584" stroke="#c9cbce" stroke-width=".9"/><ellipse cx="683.5" cy="577.3" rx="2.2" ry="1.6" fill="none" stroke="#c9cbce" stroke-width=".8" transform="rotate(-25 683.5 577.3)"/><path d="M698 581V586H693Z M734 581V586H729Z" fill="#4a4d52"/><ellipse cx="716.5" cy="576.5" rx="4" ry="2.9" fill="#c9cbce" transform="rotate(-25 716.5 576.5)"/><path d="M720.2 576V566" stroke="#9fa2a6" stroke-width=".9" stroke-dasharray="1 1"/></svg>
<div class="g" style="left:776px;top:557px;width:106px;height:32px;"></div>
<div style="left:847px;top:557px;width:35px;height:32px;background:#3280d7;border-radius:0 4px 4px 0"></div>
<svg style="left:779.8px;top:568.3px;" width="27" height="10" viewBox="0 0 27 10"><g fill="#e6e7e9"><rect x="0.0" y="0.2" width="4.6" height="2.6"/><rect x="3.9" y="2.3" width="4.6" height="2.6"/><rect x="7.6" y="4.4" width="4.6" height="2.6"/><rect x="10.7" y="6.5" width="4.6" height="2.6"/><rect x="15.2" y="4.4" width="4.6" height="2.6"/><rect x="18.7" y="2.3" width="4.6" height="2.6"/><rect x="21.8" y="0.2" width="4.6" height="2.6"/></g></svg>
<div style="left:820.8px;top:561.3px;font-size:21px;color:#74777c;line-height:23px;white-space:nowrap;line-height:22px;font-weight:bold;letter-spacing:.5px">«</div>
<svg style="left:855px;top:563px;" width="20" height="20" viewBox="0 0 20 20"><path d="M17 0V20" stroke="#fff" stroke-width="1.5"/><path d="M0.5 6.5H9V2.5L16 10L9 17.5V13.5H0.5Z" fill="#fff"/></svg>
<div class="g" style="left:894px;top:557px;width:106px;height:32px;"></div>
<div style="left:894px;top:557px;width:35px;height:32px;background:#3280d7;border-radius:4px 0 0 4px"></div>
<svg style="left:905px;top:565px;" width="13" height="16" viewBox="0 0 13 16"><path d="M0.6 0V16M12.4 0V16" stroke="#fff" stroke-width="1.2"/><path d="M2 0.5H11M2 15.5H11" stroke="#fff" stroke-width="1" stroke-dasharray="1.3 1"/><path d="M2.3 4.2H10.7M2.3 8H10.7M2.3 11.8H10.7" stroke="#fff" stroke-width="2.2"/></svg>
<svg style="left:941px;top:566px;" width="12" height="15" viewBox="0 0 12 15"><path d="M1 1Q1 .5 1.5 .5H8L11.5 4V14Q11.5 14.5 11 14.5H1.5Q1 14.5 1 14Z" fill="none" stroke="#e2e3e5" stroke-width="1.1"/><path d="M3 5.2H9.5M3 8.4H9.5M3 11.6H9.5" stroke="#e2e3e5" stroke-width="2"/></svg>
<svg style="left:977px;top:566px;" width="12" height="15" viewBox="0 0 12 15"><path d="M1 1Q1 .5 1.5 .5H8L11.5 4V14Q11.5 14.5 11 14.5H1.5Q1 14.5 1 14Z" fill="none" stroke="#e2e3e5" stroke-width="1.1"/></svg>
<div style="left:979.3px;top:567.5px;font-size:11.5px;color:#e6e7e9;line-height:13.5px;white-space:nowrap;font-family:'Liberation Serif',serif;font-weight:bold;line-height:13px">1</div>
<div class="g" style="left:1012px;top:557px;width:38px;height:32px;"></div>
<svg style="left:1021px;top:566px;" width="20" height="15" viewBox="0 0 20 15"><rect x="4" y="0.5" width="12" height="3.4" fill="#c9cbce"/><rect x="0.5" y="3.2" width="19" height="8" rx="1.5" fill="#c9cbce"/><rect x="4" y="7" width="12" height="7.5" fill="#c9cbce" stroke="#202224" stroke-width="1"/><path d="M5.5 9.5H14.5M5.5 12H14.5" stroke="#202224" stroke-width="1"/></svg>
<svg style="left:1863px;top:558px;" width="11" height="11" viewBox="0 0 11 11"><path d="M1 10L9.5 1.5M4 1H10V7" fill="none" stroke="#d4d6d8" stroke-width="1.5"/></svg>
<svg style="left:1886px;top:558px;" width="11" height="11" viewBox="0 0 11 11"><path d="M1 1L10 10M10 1L1 10" stroke="#e2e3e5" stroke-width="1.7"/></svg>
<div style="left:3px;top:596.8px;width:220.3px;height:31px;background:#1f2124;"></div>
<svg style="left:10px;top:605.5px;" width="17" height="12" viewBox="0 0 17 12"><path d="M0 1H17M0 4.3H17M0 7.6H17M0 11H17" stroke="#c9cbce" stroke-width="1.4"/></svg>
<div style="left:35px;top:597px;width:13.2px;height:30px;background:#99fd2c;"></div>
<div style="left:68.5px;top:604px;font-size:12.5px;color:#e6e7e9;line-height:14.5px;white-space:nowrap;line-height:16px">Addictive Drums 2 x64</div>
<svg style="left:207.5px;top:609.5px;" width="8" height="5" viewBox="0 0 8 5"><path d="M0 0H8L4.0 5Z" fill="#7c8087"/></svg>
<div style="left:3px;top:627.8px;width:220.3px;height:345px;background:#373a3f;border-radius:0 0 0 5px"></div>
<div style="left:157px;top:628px;width:32.3px;height:23.3px;background:#30333a;"></div>
<div style="left:190px;top:628px;width:33.3px;height:23.3px;background:#30333a;"></div>
<svg style="left:9.5px;top:635.5px;" width="11" height="9" viewBox="0 0 11 9"><path d="M0 0H1.7V5H3.2V0H4.8V5H6.3V0H7.9V5H9.4V0H11V9H0Z" fill="#ff7d2e"/></svg>
<div style="left:28px;top:632.5px;font-size:11.5px;color:#cfd1d5;line-height:13.5px;white-space:nowrap;line-height:15px">Nástroj</div>
<div style="left:157px;top:632px;font-size:12.5px;color:#cfd1d5;line-height:14.5px;white-space:nowrap;width:32.3px;text-align:center;line-height:16px">M</div>
<div style="left:190px;top:632px;font-size:12.5px;color:#cfd1d5;line-height:14.5px;white-space:nowrap;width:33.3px;text-align:center;line-height:16px">S</div>
<div style="left:7.8px;top:659.5px;font-size:11.5px;color:#d3d5d9;line-height:13.5px;white-space:nowrap;line-height:15px">Poslech not</div>
<div style="left:201.3px;top:658.3px;width:18.7px;height:18px;background:#222428;border-radius:3px;box-shadow:inset 0 0 0 1px #1a1b1e"></div>
<svg style="left:205.5px;top:662.5px;" width="11" height="10" viewBox="0 0 11 10"><path d="M1 5.5L4 8.5L10 1" fill="none" stroke="#fff" stroke-width="1.9"/></svg>
<div style="left:7.8px;top:686.5px;font-size:11.5px;color:#d3d5d9;line-height:13.5px;white-space:nowrap;line-height:15px">Výchozí Velocity</div>
<div style="left:180.3px;top:685.4px;width:39.7px;height:18.3px;background:#222428;border-radius:3px;box-shadow:inset 0 0 0 1px #1a1b1e"></div>
<div style="left:180.3px;top:687px;font-size:11px;color:#d3d5d9;line-height:13px;white-space:nowrap;width:39.7px;text-align:center;line-height:15px">80%</div>
<div style="left:7.8px;top:713.5px;font-size:11.5px;color:#d3d5d9;line-height:13.5px;white-space:nowrap;line-height:15px">Sound Variations</div>
<div style="left:201.3px;top:712.6px;width:18.7px;height:18px;background:#484c54;border-radius:3px;box-shadow:inset 0 0 0 1px #2b2d31"></div>
<svg style="left:205px;top:716px;" width="12" height="12" viewBox="0 0 12 12"><path d="M1 2.4A3.2 3.2 0 0 1 6.4 3.6L6.2 5.1L11.4 9.9L10.2 11.2L4.9 6.4L3.5 6.6A3.2 3.2 0 0 1 0.8 4.8L3.3 5L4.2 3.3Z" fill="#d4d6d8"/></svg>
<div style="left:3px;top:744px;width:57px;height:24.7px;background:#2f6bbd;border-radius:3px 0 0 0"></div>
<div style="left:60px;top:767.7px;width:163px;height:1px;background:#2b2d32;"></div>
<div style="left:8px;top:744px;width:52px;height:24.7px;overflow:hidden"><div style="left:0;top:5px;font-size:12px;line-height:15px;color:#fff;white-space:nowrap">Symboly</div></div>
<div style="left:70.7px;top:749px;font-size:12px;color:#cfd1d5;line-height:14px;white-space:nowrap;line-height:15px">Stopa</div>
<div style="left:120px;top:749px;font-size:12px;color:#cfd1d5;line-height:14px;white-space:nowrap;line-height:15px">Rozložení stránky</div>
<div style="left:216px;top:771.5px;width:4px;height:149.5px;background:#7b7e83;border-radius:2px"></div>
<div style="left:19px;top:790px;font-size:15px;color:#c7c9cc;line-height:17px;white-space:nowrap;font-family:'DejaVu Sans',sans-serif;line-height:20px;width:20px;text-align:center">♯</div>
<div style="left:66px;top:788px;font-size:17px;color:#c7c9cc;line-height:19px;white-space:nowrap;font-family:'DejaVu Sans',sans-serif;line-height:22px;width:32px;text-align:center;letter-spacing:-1.5px">♯/♭</div>
<svg style="left:114px;top:784px;" width="42" height="26" viewBox="0 0 42 26"><path d="M3 8Q20 -3 37 8" fill="none" stroke="#c7c9cc" stroke-width="1"/><path d="M3.5 22.5V12M31.5 22.5V12" stroke="#c7c9cc" stroke-width=".9"/><ellipse cx="6.2" cy="11.8" rx="3" ry="2.1" fill="none" stroke="#c7c9cc" stroke-width=".9" transform="rotate(-25 6.2 11.8)"/><ellipse cx="34.2" cy="11.8" rx="3" ry="2.1" fill="none" stroke="#c7c9cc" stroke-width=".9" transform="rotate(-25 34.2 11.8)"/></svg>
<svg style="left:171px;top:789px;" width="34" height="20" viewBox="0 0 34 20"><path d="M2 6Q16 -3 31 6" fill="none" stroke="#c7c9cc" stroke-width="1"/><path d="M2.5 18V12" stroke="#c7c9cc" stroke-width=".8"/><ellipse cx="4.0" cy="12" rx="1.6" ry="1.2" fill="#c7c9cc"/><path d="M10.5 18V10" stroke="#c7c9cc" stroke-width=".8"/><ellipse cx="12.0" cy="10" rx="1.6" ry="1.2" fill="#c7c9cc"/><path d="M19 18V10" stroke="#c7c9cc" stroke-width=".8"/><ellipse cx="20.5" cy="10" rx="1.6" ry="1.2" fill="#c7c9cc"/><path d="M27.5 18V12" stroke="#c7c9cc" stroke-width=".8"/><ellipse cx="29.0" cy="12" rx="1.6" ry="1.2" fill="#c7c9cc"/></svg>
<svg style="left:23.5px;top:846px;" width="14" height="10" viewBox="0 0 14 10"><path d="M0.5 0.8L13 5L0.5 9.2" fill="none" stroke="#c7c9cc" stroke-width="1.3"/></svg>
<div style="left:70px;top:842px;font-size:15px;color:#c7c9cc;line-height:17px;white-space:nowrap;font-family:'Liberation Serif',serif;font-style:italic;line-height:18px;width:24px;text-align:center">sf</div>
<div style="left:122px;top:842px;font-size:15px;color:#c7c9cc;line-height:17px;white-space:nowrap;font-family:'Liberation Serif',serif;font-style:italic;font-weight:bold;line-height:18px;width:24px;text-align:center">f</div>
<svg style="left:176px;top:844px;" width="22" height="14" viewBox="0 0 22 14"><path d="M21.5 0.7L1 7L21.5 13.3" fill="none" stroke="#c7c9cc" stroke-width="1.1"/></svg>
<div style="left:21px;top:891px;font-size:20px;color:#c7c9cc;line-height:22px;white-space:nowrap;font-family:'Liberation Serif',serif;font-style:italic;line-height:24px;width:20px;text-align:center;letter-spacing:-1px">tr</div>
<svg style="left:76px;top:894px;" width="13" height="20" viewBox="0 0 13 20"><path d="M6.5 0V20" stroke="#c7c9cc" stroke-width="1.2"/><path d="M1 7L12 4M1 11.5L12 8.5M1 16L12 13" stroke="#c7c9cc" stroke-width="1.5"/></svg>
<svg style="left:130px;top:892px;" width="8" height="26" viewBox="0 0 8 26"><path d="M4.6 1Q1 4 3 6.5T4.6 12Q1 15 3 17.5T3.6 24.5" fill="none" stroke="#c7c9cc" stroke-width="2.1" stroke-linecap="round"/></svg>
<svg style="left:172px;top:896px;" width="30" height="18" viewBox="0 0 30 18"><path d="M1 16.5L28 2.5" stroke="#c7c9cc" stroke-width=".9"/><text x="7" y="11" font-family="Liberation Serif,serif" font-style="italic" font-size="6" fill="#c7c9cc" transform="rotate(-27 7 11)">gliss.</text></svg>
<svg style="left:21px;top:940px;" width="20" height="33" viewBox="0 0 20 33"><g transform="scale(1.42)"><path d="M7.6 22.5Q4.5 23 4.2 20.6Q4.2 19.2 5.6 19.2Q6.8 19.4 6.6 20.6Q6.3 21.4 5.4 21.3Q6 22 7.4 21.7Q9.3 21.2 9 18.8L6.5 4.5Q6 1.2 8.2 0.3Q9.7 1.6 9.3 4.3Q8.9 6.5 6.3 9Q3.4 11.6 3.4 14Q3.6 17.3 7.3 17.4Q10.6 17.2 10.4 14.3Q10 12 7.7 12Q5.7 12.2 5.7 14.2Q5.8 15.4 6.9 15.8Q5 15.6 4.8 13.6Q4.9 11 7.7 10.7Q11.3 10.8 11.5 14.4Q11.4 18 7.5 18.3Q2.4 18.2 2.2 13.8Q2.3 11.2 5.2 8.4Q8.3 5.6 8.5 3.6Q8.6 2.2 8 1.9Q7 2.6 7.3 4.6L9.8 18.7Q10.2 21.8 7.6 22.5Z" fill="#c7c9cc"/></g></svg>
<div style="left:68px;top:946px;font-size:10px;color:#9fa2a6;line-height:12px;white-space:nowrap;font-family:'Liberation Serif',serif;font-style:italic;line-height:14px">8va</div>
<svg style="left:84px;top:955px;" width="13" height="5" viewBox="0 0 13 5"><path d="M0 0.6H11" stroke="#9fa2a6" stroke-width="1" stroke-dasharray="2 1.5"/><path d="M11.6 0.6V4" stroke="#9fa2a6" stroke-width="1"/></svg>
<div style="left:123px;top:946px;font-size:17px;color:#c7c9cc;line-height:19px;white-space:nowrap;font-family:'Liberation Serif',serif;line-height:22px">Lyr</div>
<div style="left:181.6px;top:946.7px;font-size:14px;color:#c7c9cc;line-height:16px;white-space:nowrap;font-weight:bold;line-height:22px">O</div>
<div style="left:0px;top:972.5px;width:260px;height:3px;background:#1e1f22;"></div>
<div style="left:223.2px;top:596.8px;width:0.8px;height:375.7px;background:#17181b;"></div>
<div style="left:224px;top:955px;width:1681px;height:17.5px;background:#25282c;border-radius:0 0 5px 0"></div>
<svg style="left:231px;top:959.5px;" width="6" height="8" viewBox="0 0 6 8"><path d="M6 0V8L0 4Z" fill="#8b8f95"/></svg>
<div style="left:249px;top:961px;width:14px;height:5px;background:#8f9297;border-radius:2.5px"></div>
<svg style="left:1766px;top:959.5px;" width="6" height="8" viewBox="0 0 6 8"><path d="M0 0V8L6 4Z" fill="#8b8f95"/></svg>
<div style="left:1787px;top:962.5px;width:90px;height:2px;background:#8b8d91;"></div>
<svg style="left:1785.5px;top:961.5px;" width="4" height="4" viewBox="0 0 4 4"><circle cx="2" cy="2" r="1.6" fill="#8b8f95"/></svg>
<div style="left:1821px;top:959px;width:3.2px;height:9.2px;background:#9a9da2;border-radius:1.2px"></div>
<svg style="left:1869.5px;top:959.5px;" width="9" height="9" viewBox="0 0 9 9"><circle cx="4.5" cy="4.5" r="3.9" fill="#8b8f95"/></svg>
<div style="left:1888.3px;top:596.8px;width:16.7px;height:358.2px;background:#25282c;"></div>
<svg style="left:1892px;top:601.5px;" width="9" height="6" viewBox="0 0 9 6"><path d="M0 6L4.5 0L9 6Z" fill="#8b8f95"/></svg>
<svg style="left:1892px;top:944px;" width="9" height="6" viewBox="0 0 9 6"><path d="M0 0H9L4.5 6Z" fill="#8b8f95"/></svg>
<div style="left:224px;top:596.8px;width:1664.3px;height:358.2px;background:#fcfcfc;"></div>
<div style="left:344.5px;top:596.8px;width:1543.8px;height:20.3px;background:#f5f5f5;"></div>
<div style="left:344.5px;top:617.1px;width:1543.8px;height:4px;background:linear-gradient(180deg,rgba(0,0,0,.22),rgba(0,0,0,.06) 50%,rgba(0,0,0,0))"></div>
<div style="left:224px;top:596.8px;width:120.5px;height:358.2px;background:#f4f4f4;"></div>
<div style="left:343.5px;top:596.8px;width:6px;height:358.2px;background:linear-gradient(90deg,rgba(0,0,0,.30),rgba(0,0,0,.10) 40%,rgba(0,0,0,0))"></div>
<div style="left:443.6px;top:599.7px;font-size:11.5px;color:#222;line-height:13.5px;white-space:nowrap;width:20px;text-align:center;line-height:14px">1</div>
<div style="left:696.5px;top:599.7px;font-size:11.5px;color:#222;line-height:13.5px;white-space:nowrap;width:20px;text-align:center;line-height:14px">2</div>
<div style="left:953px;top:599.7px;font-size:11.5px;color:#222;line-height:13.5px;white-space:nowrap;width:20px;text-align:center;line-height:14px">3</div>
<div style="left:1249.5px;top:599.7px;font-size:11.5px;color:#222;line-height:13.5px;white-space:nowrap;width:20px;text-align:center;line-height:14px">4</div>
<div style="left:1610.5px;top:599.7px;font-size:11.5px;color:#222;line-height:13.5px;white-space:nowrap;width:20px;text-align:center;line-height:14px">5</div>
<div style="left:357.8px;top:704.5px;width:4.8px;height:70px;background:#7ec3f3;border-radius:2.4px"></div>
<div style="left:225px;top:596.8px;width:1663.3px;height:358.2px;overflow:hidden"><svg style="left:-225px;top:-596.8px" width="1913" height="1023" viewBox="0 0 1913 1023"><path d="M232 755.5H1888.7M232 747.5H1888.7M232 739.4H1888.7M232 731.4H1888.7M232 723.4H1888.7" stroke="#6e6e6e" stroke-width=".9" fill="none"/><path d="M239 733.3V747.4M243.2 733.3V747.4" stroke="#0a0a0a" stroke-width="2.1"/><path d="M564.7 723.1V755.8M852.8 723.1V755.8M1078 723.1V755.8M1445.8 723.1V755.8M1799.8 723.1V755.8" stroke="#1a1a1a" stroke-width="1.3"/><path d="M409.1 763.5H424.7M409.1 771.6H424.7M409.1 779.6H424.7M409.1 787.6H424.7M409.1 795.6H424.7M409.1 803.7H424.7M409.1 811.7H424.7M409.1 819.7H424.7M446.8 763.5H462.4M446.8 771.6H462.4M446.8 779.6H462.4M446.8 787.6H462.4M470.5 763.5H486.1M470.5 771.6H486.1M470.5 779.6H486.1M470.5 787.6H486.1M470.5 763.5H486.1M470.5 771.6H486.1M470.5 779.6H486.1M470.5 787.6H486.1M470.5 795.6H486.1M470.5 803.7H486.1M470.5 811.7H486.1M494.4 763.5H510.0M494.4 771.6H510.0M494.4 779.6H510.0M494.4 787.6H510.0M517.5 763.5H533.1M517.5 771.6H533.1M517.5 779.6H533.1M517.5 787.6H533.1M517.5 795.6H533.1M517.5 803.7H533.1M517.5 811.7H533.1M535.1 763.5H550.7M535.1 771.6H550.7M535.1 779.6H550.7M535.1 787.6H550.7M535.1 763.5H550.7M535.1 771.6H550.7M535.1 779.6H550.7M535.1 787.6H550.7M535.1 795.6H550.7M535.1 803.7H550.7M535.1 811.7H550.7M535.1 819.7H550.7M578.6 763.5H594.2M578.6 771.6H594.2M578.6 779.6H594.2M578.6 787.6H594.2M596.5 763.5H612.1M596.5 771.6H612.1M596.5 779.6H612.1M596.5 787.6H612.1M596.5 795.6H612.1M596.5 803.7H612.1M596.5 811.7H612.1M619.9 763.5H635.5M619.9 771.6H635.5M619.9 779.6H635.5M619.9 787.6H635.5M578.6 763.5H594.2M578.6 771.6H594.2M578.6 779.6H594.2M578.6 787.6H594.2M578.6 795.6H594.2M578.6 803.7H594.2M578.6 811.7H594.2M578.6 819.7H594.2M619.9 763.5H635.5M619.9 771.6H635.5M619.9 779.6H635.5M619.9 787.6H635.5M619.9 795.6H635.5M619.9 803.7H635.5M619.9 811.7H635.5M643.4 763.5H659.0M643.4 771.6H659.0M643.4 779.6H659.0M643.4 787.6H659.0M667.0 763.5H682.6M667.0 771.6H682.6M667.0 779.6H682.6M667.0 787.6H682.6M667.0 795.6H682.6M667.0 803.7H682.6M667.0 811.7H682.6M684.4 763.5H700.0M684.4 771.6H700.0M684.4 779.6H700.0M684.4 787.6H700.0M702.1 763.5H717.7M702.1 771.6H717.7M702.1 779.6H717.7M702.1 787.6H717.7M702.1 795.6H717.7M702.1 803.7H717.7M702.1 811.7H717.7M643.4 763.5H659.0M643.4 771.6H659.0M643.4 779.6H659.0M643.4 787.6H659.0M643.4 795.6H659.0M643.4 803.7H659.0M643.4 811.7H659.0M643.4 819.7H659.0M719.7 763.5H735.3M719.7 771.6H735.3M719.7 779.6H735.3M719.7 787.6H735.3M743.1 763.5H758.7M743.1 771.6H758.7M743.1 779.6H758.7M743.1 787.6H758.7M719.7 763.5H735.3M719.7 771.6H735.3M719.7 779.6H735.3M719.7 787.6H735.3M719.7 795.6H735.3M719.7 803.7H735.3M719.7 811.7H735.3M719.7 819.7H735.3M743.1 763.5H758.7M743.1 771.6H758.7M743.1 779.6H758.7M743.1 787.6H758.7M743.1 795.6H758.7M743.1 803.7H758.7M743.1 811.7H758.7M766.5 763.5H782.1M766.5 771.6H782.1M766.5 779.6H782.1M766.5 787.6H782.1M789.9 763.5H805.5M789.9 771.6H805.5M789.9 779.6H805.5M789.9 787.6H805.5M789.9 795.6H805.5M789.9 803.7H805.5M789.9 811.7H805.5M807.5 763.5H823.1M807.5 771.6H823.1M807.5 779.6H823.1M807.5 787.6H823.1M830.1 763.5H845.7M830.1 771.6H845.7M830.1 779.6H845.7M830.1 787.6H845.7M830.1 795.6H845.7M830.1 803.7H845.7M830.1 811.7H845.7M807.5 763.5H823.1M807.5 771.6H823.1M807.5 779.6H823.1M807.5 787.6H823.1M807.5 795.6H823.1M807.5 803.7H823.1M807.5 811.7H823.1M807.5 819.7H823.1M866.9 763.5H882.5M866.9 771.6H882.5M866.9 779.6H882.5M866.9 787.6H882.5M890.3 763.5H905.9M890.3 771.6H905.9M890.3 779.6H905.9M890.3 787.6H905.9M914.1 763.5H929.7M914.1 771.6H929.7M937.5 763.5H953.1M937.5 771.6H953.1M937.5 779.6H953.1M937.5 787.6H953.1M866.9 763.5H882.5M866.9 771.6H882.5M866.9 779.6H882.5M866.9 787.6H882.5M866.9 795.6H882.5M866.9 803.7H882.5M866.9 811.7H882.5M866.9 819.7H882.5M890.3 763.5H905.9M890.3 771.6H905.9M890.3 779.6H905.9M890.3 787.6H905.9M890.3 795.6H905.9M890.3 803.7H905.9M890.3 811.7H905.9M914.1 763.5H929.7M914.1 771.6H929.7M914.1 779.6H929.7M914.1 787.6H929.7M914.1 795.6H929.7M914.1 803.7H929.7M914.1 811.7H929.7M914.1 819.7H929.7M937.5 763.5H953.1M937.5 771.6H953.1M937.5 779.6H953.1M937.5 787.6H953.1M937.5 795.6H953.1M937.5 803.7H953.1M937.5 811.7H953.1M937.5 819.7H953.1M960.6 763.5H976.2M960.6 771.6H976.2M960.6 779.6H976.2M960.6 787.6H976.2M984.1 763.5H999.7M984.1 771.6H999.7M984.1 779.6H999.7M984.1 787.6H999.7M984.1 763.5H999.7M984.1 771.6H999.7M984.1 779.6H999.7M984.1 787.6H999.7M984.1 795.6H999.7M984.1 803.7H999.7M984.1 811.7H999.7M1007.5 763.5H1023.1M1007.5 771.6H1023.1M1007.5 779.6H1023.1M1007.5 787.6H1023.1M1030.9 763.5H1046.5M1030.9 771.6H1046.5M1030.9 779.6H1046.5M1030.9 787.6H1046.5M1030.9 795.6H1046.5M1030.9 803.7H1046.5M1030.9 811.7H1046.5M1048.8 763.5H1064.4M1048.8 771.6H1064.4M1048.8 779.6H1064.4M1048.8 787.6H1064.4M1048.8 763.5H1064.4M1048.8 771.6H1064.4M1048.8 779.6H1064.4M1048.8 787.6H1064.4M1048.8 795.6H1064.4M1048.8 803.7H1064.4M1048.8 811.7H1064.4M1048.8 819.7H1064.4M1092.0 763.5H1107.6M1092.0 771.6H1107.6M1092.0 779.6H1107.6M1092.0 787.6H1107.6M1109.9 763.5H1125.5M1109.9 771.6H1125.5M1109.9 779.6H1125.5M1109.9 787.6H1125.5M1109.9 795.6H1125.5M1109.9 803.7H1125.5M1109.9 811.7H1125.5M1132.9 763.5H1148.5M1132.9 771.6H1148.5M1132.9 779.6H1148.5M1132.9 787.6H1148.5M1092.0 763.5H1107.6M1092.0 771.6H1107.6M1092.0 779.6H1107.6M1092.0 787.6H1107.6M1092.0 795.6H1107.6M1092.0 803.7H1107.6M1092.0 811.7H1107.6M1092.0 819.7H1107.6M1132.9 763.5H1148.5M1132.9 771.6H1148.5M1132.9 779.6H1148.5M1132.9 787.6H1148.5M1132.9 795.6H1148.5M1132.9 803.7H1148.5M1132.9 811.7H1148.5M1151.3 763.5H1166.9M1151.3 771.6H1166.9M1151.3 779.6H1166.9M1151.3 787.6H1166.9M1151.3 795.6H1166.9M1151.3 803.7H1166.9M1151.3 811.7H1166.9M1151.3 819.7H1166.9M1174.4 763.5H1190.0M1174.4 771.6H1190.0M1174.4 779.6H1190.0M1174.4 787.6H1190.0M1198.2 763.5H1213.8M1198.2 771.6H1213.8M1198.2 779.6H1213.8M1198.2 787.6H1213.8M1198.2 795.6H1213.8M1198.2 803.7H1213.8M1198.2 811.7H1213.8M1221.2 763.5H1236.8M1221.2 771.6H1236.8M1221.2 779.6H1236.8M1221.2 787.6H1236.8M1239.2 763.5H1254.8M1239.2 771.6H1254.8M1239.2 779.6H1254.8M1239.2 787.6H1254.8M1239.2 795.6H1254.8M1239.2 803.7H1254.8M1239.2 811.7H1254.8M1248.8 763.5H1264.4M1248.8 771.6H1264.4M1248.8 779.6H1264.4M1248.8 787.6H1264.4M1248.8 795.6H1264.4M1248.8 803.7H1264.4M1248.8 811.7H1264.4M1248.8 819.7H1264.4M1270.3 763.5H1285.9M1270.3 771.6H1285.9M1270.3 779.6H1285.9M1270.3 787.6H1285.9M1305.6 763.5H1321.2M1305.6 771.6H1321.2M1305.6 779.6H1321.2M1305.6 787.6H1321.2M1305.6 795.6H1321.2M1305.6 803.7H1321.2M1305.6 811.7H1321.2M1340.5 763.5H1356.1M1340.5 771.6H1356.1M1340.5 779.6H1356.1M1340.5 787.6H1356.1M1363.5 763.5H1379.1M1363.5 771.6H1379.1M1363.5 779.6H1379.1M1363.5 787.6H1379.1M1363.5 795.6H1379.1M1363.5 803.7H1379.1M1363.5 811.7H1379.1M1317.5 763.5H1333.1M1317.5 771.6H1333.1M1317.5 779.6H1333.1M1317.5 787.6H1333.1M1317.5 795.6H1333.1M1317.5 803.7H1333.1M1317.5 811.7H1333.1M1381.3 763.5H1396.9M1381.3 771.6H1396.9M1381.3 779.6H1396.9M1381.3 787.6H1396.9M1404.9 763.5H1420.5M1404.9 771.6H1420.5M1404.9 779.6H1420.5M1404.9 787.6H1420.5M1381.3 763.5H1396.9M1381.3 771.6H1396.9M1381.3 779.6H1396.9M1381.3 787.6H1396.9M1381.3 795.6H1396.9M1381.3 803.7H1396.9M1381.3 811.7H1396.9M1381.3 819.7H1396.9M1404.9 763.5H1420.5M1404.9 771.6H1420.5M1404.9 779.6H1420.5M1404.9 787.6H1420.5M1404.9 795.6H1420.5M1404.9 803.7H1420.5M1404.9 811.7H1420.5M1422.6 763.5H1438.2M1422.6 771.6H1438.2M1422.6 779.6H1438.2M1422.6 787.6H1438.2M1422.6 795.6H1438.2M1422.6 803.7H1438.2M1422.6 811.7H1438.2M1422.6 819.7H1438.2M1459.7 763.5H1475.3M1459.7 771.6H1475.3M1488.1 763.5H1503.7M1488.1 771.6H1503.7M1488.1 779.6H1503.7M1488.1 787.6H1503.7M1488.1 795.6H1503.7M1488.1 803.7H1503.7M1488.1 811.7H1503.7M1506.2 763.5H1521.8M1506.2 771.6H1521.8M1506.2 779.6H1521.8M1506.2 787.6H1521.8M1506.2 795.6H1521.8M1506.2 803.7H1521.8M1506.2 811.7H1521.8M1523.8 763.5H1539.4M1523.8 771.6H1539.4M1523.8 779.6H1539.4M1523.8 787.6H1539.4M1523.8 795.6H1539.4M1523.8 803.7H1539.4M1523.8 811.7H1539.4M1605.2 763.5H1620.8M1605.2 771.6H1620.8M1605.2 779.6H1620.8M1605.2 787.6H1620.8M1605.2 795.6H1620.8M1605.2 803.7H1620.8M1605.2 811.7H1620.8M1605.2 819.7H1620.8M1661.7 763.5H1677.3M1661.7 771.6H1677.3M1661.7 779.6H1677.3M1661.7 787.6H1677.3M1661.7 763.5H1677.3M1661.7 771.6H1677.3M1661.7 779.6H1677.3M1661.7 787.6H1677.3M1661.7 795.6H1677.3M1661.7 803.7H1677.3M1661.7 811.7H1677.3M1700.3 763.5H1715.9M1700.3 771.6H1715.9M1700.3 779.6H1715.9M1700.3 787.6H1715.9M1723.5 763.5H1739.1M1723.5 771.6H1739.1M1723.5 779.6H1739.1M1723.5 787.6H1739.1M1723.5 795.6H1739.1M1723.5 803.7H1739.1M1723.5 811.7H1739.1M1747.1 763.5H1762.7M1747.1 771.6H1762.7M1747.1 779.6H1762.7M1747.1 787.6H1762.7M1770.5 763.5H1786.1M1770.5 771.6H1786.1M1770.5 779.6H1786.1M1770.5 787.6H1786.1M1770.5 795.6H1786.1M1770.5 803.7H1786.1M1770.5 811.7H1786.1M1747.1 763.5H1762.7M1747.1 771.6H1762.7M1747.1 779.6H1762.7M1747.1 787.6H1762.7M1747.1 795.6H1762.7M1747.1 803.7H1762.7M1747.1 811.7H1762.7M1747.1 819.7H1762.7M1814.0 763.5H1829.6M1814.0 771.6H1829.6M1814.0 779.6H1829.6M1814.0 787.6H1829.6M1831.3 763.5H1846.9M1831.3 771.6H1846.9M1831.3 779.6H1846.9M1831.3 787.6H1846.9M1831.3 795.6H1846.9M1831.3 803.7H1846.9M1831.3 811.7H1846.9M1855.4 763.5H1871.0M1855.4 771.6H1871.0M1855.4 779.6H1871.0M1855.4 787.6H1871.0M1814.0 763.5H1829.6M1814.0 771.6H1829.6M1814.0 779.6H1829.6M1814.0 787.6H1829.6M1814.0 795.6H1829.6M1814.0 803.7H1829.6M1814.0 811.7H1829.6M1814.0 819.7H1829.6M1855.4 763.5H1871.0M1855.4 771.6H1871.0M1855.4 779.6H1871.0M1855.4 787.6H1871.0M1855.4 795.6H1871.0M1855.4 803.7H1871.0M1855.4 811.7H1871.0M1873.1 763.5H1888.7M1873.1 771.6H1888.7M1873.1 779.6H1888.7M1873.1 787.6H1888.7M1873.1 795.6H1888.7M1873.1 803.7H1888.7M1873.1 811.7H1888.7M1873.1 819.7H1888.7" stroke="#8a8a8a" stroke-width=".9" fill="none"/><path d="M422.3 722.5V696.3M412.2 820.7V847.2M460.1 786.6V739.8M483.8 786.6V739.8M473.6 816.7V843.6M507.6 786.6V739.8M530.8 814.7V739.8M548.4 786.6V739.8M538.2 820.7V847.2M591.9 786.6V739.8M609.8 814.7V739.8M633.2 786.6V739.8M581.7 820.7V846.6M623.0 816.7V845.2M656.7 786.6V739.8M680.2 814.7V739.8M697.7 786.6V739.8M715.4 814.7V739.8M646.5 820.7V837.2M733.0 786.6V739.8M756.4 786.6V739.8M722.8 820.7V846.6M746.2 816.7V845.2M779.8 786.6V739.8M803.2 814.7V739.8M820.8 786.6V739.8M843.4 814.7V739.8M810.6 820.7V847.2M880.2 786.6V739.8M903.6 786.6V739.8M927.4 774.6V739.8M950.8 786.6V739.8M870.0 820.7V847.0M893.4 816.7V847.0M917.2 820.7V847.0M940.6 820.7V847.0M973.9 786.6V739.8M997.4 786.6V739.8M987.2 816.7V843.6M1020.8 786.6V739.8M1044.2 814.7V739.8M1062.0 786.6V739.8M1051.9 820.7V847.2M1105.2 786.6V739.8M1123.2 814.7V739.8M1146.2 786.6V739.8M1095.1 820.7V847.0M1136.0 816.7V847.0M1154.4 820.7V847.0M1187.7 786.6V739.8M1211.5 814.7V739.8M1234.5 786.6V739.8M1252.5 814.7V739.8M1251.9 820.7V847.2M1283.5 786.6V739.8M1318.9 814.7V739.8M1353.8 786.6V739.8M1376.8 814.7V739.8M1320.6 816.7V843.6M1394.5 786.6V739.8M1418.2 786.6V739.8M1384.4 820.7V847.0M1408.0 816.7V847.0M1425.7 820.7V847.0M1473.0 774.6V739.8M1491.2 816.7V848.6M1509.3 816.7V847.8M1526.9 816.7V847.0M1560.1 734.4V703.7M1583.2 738.4V700.8M1600.6 738.4V698.5M1618.2 722.4V696.3M1608.3 820.7V847.2M1675.0 786.6V739.8M1664.8 816.7V843.6M1713.5 786.6V739.8M1736.8 814.7V739.8M1760.4 786.6V739.8M1783.8 814.7V739.8M1750.2 820.7V847.2M1827.2 786.6V739.8M1844.5 814.7V739.8M1868.7 786.6V739.8M1817.1 820.7V847.0M1858.5 816.7V847.0M1876.2 820.7V847.0" stroke="#0a0a0a" stroke-width="1.05" fill="none"/><g fill="#0a0a0a"><ellipse cx="416.9" cy="723.4" rx="5.6" ry="3.75" transform="rotate(-24 416.9 723.4)"/><ellipse cx="416.9" cy="819.7" rx="5.6" ry="3.75" transform="rotate(-24 416.9 819.7)"/><ellipse cx="454.6" cy="787.6" rx="5.6" ry="3.75" transform="rotate(-24 454.6 787.6)"/><ellipse cx="478.3" cy="787.6" rx="5.6" ry="3.75" transform="rotate(-24 478.3 787.6)"/><ellipse cx="478.3" cy="815.7" rx="5.6" ry="3.75" transform="rotate(-24 478.3 815.7)"/><ellipse cx="502.2" cy="787.6" rx="5.6" ry="3.75" transform="rotate(-24 502.2 787.6)"/><ellipse cx="525.3" cy="815.7" rx="5.6" ry="3.75" transform="rotate(-24 525.3 815.7)"/><ellipse cx="542.9" cy="787.6" rx="5.6" ry="3.75" transform="rotate(-24 542.9 787.6)"/><ellipse cx="542.9" cy="819.7" rx="5.6" ry="3.75" transform="rotate(-24 542.9 819.7)"/><ellipse cx="586.4" cy="787.6" rx="5.6" ry="3.75" transform="rotate(-24 586.4 787.6)"/><ellipse cx="604.3" cy="815.7" rx="5.6" ry="3.75" transform="rotate(-24 604.3 815.7)"/><ellipse cx="627.7" cy="787.6" rx="5.6" ry="3.75" transform="rotate(-24 627.7 787.6)"/><ellipse cx="586.4" cy="819.7" rx="5.6" ry="3.75" transform="rotate(-24 586.4 819.7)"/><ellipse cx="627.7" cy="815.7" rx="5.6" ry="3.75" transform="rotate(-24 627.7 815.7)"/><ellipse cx="651.2" cy="787.6" rx="5.6" ry="3.75" transform="rotate(-24 651.2 787.6)"/><ellipse cx="674.8" cy="815.7" rx="5.6" ry="3.75" transform="rotate(-24 674.8 815.7)"/><ellipse cx="692.2" cy="787.6" rx="5.6" ry="3.75" transform="rotate(-24 692.2 787.6)"/><ellipse cx="709.9" cy="815.7" rx="5.6" ry="3.75" transform="rotate(-24 709.9 815.7)"/><ellipse cx="651.2" cy="819.7" rx="5.6" ry="3.75" transform="rotate(-24 651.2 819.7)"/><ellipse cx="727.5" cy="787.6" rx="5.6" ry="3.75" transform="rotate(-24 727.5 787.6)"/><ellipse cx="750.9" cy="787.6" rx="5.6" ry="3.75" transform="rotate(-24 750.9 787.6)"/><ellipse cx="727.5" cy="819.7" rx="5.6" ry="3.75" transform="rotate(-24 727.5 819.7)"/><ellipse cx="750.9" cy="815.7" rx="5.6" ry="3.75" transform="rotate(-24 750.9 815.7)"/><ellipse cx="774.3" cy="787.6" rx="5.6" ry="3.75" transform="rotate(-24 774.3 787.6)"/><ellipse cx="797.7" cy="815.7" rx="5.6" ry="3.75" transform="rotate(-24 797.7 815.7)"/><ellipse cx="815.3" cy="787.6" rx="5.6" ry="3.75" transform="rotate(-24 815.3 787.6)"/><ellipse cx="837.9" cy="815.7" rx="5.6" ry="3.75" transform="rotate(-24 837.9 815.7)"/><ellipse cx="815.3" cy="819.7" rx="5.6" ry="3.75" transform="rotate(-24 815.3 819.7)"/><ellipse cx="874.7" cy="787.6" rx="5.6" ry="3.75" transform="rotate(-24 874.7 787.6)"/><ellipse cx="898.1" cy="787.6" rx="5.6" ry="3.75" transform="rotate(-24 898.1 787.6)"/><ellipse cx="921.9" cy="775.6" rx="5.6" ry="3.75" transform="rotate(-24 921.9 775.6)"/><ellipse cx="945.3" cy="787.6" rx="5.6" ry="3.75" transform="rotate(-24 945.3 787.6)"/><ellipse cx="874.7" cy="819.7" rx="5.6" ry="3.75" transform="rotate(-24 874.7 819.7)"/><ellipse cx="898.1" cy="815.7" rx="5.6" ry="3.75" transform="rotate(-24 898.1 815.7)"/><ellipse cx="921.9" cy="819.7" rx="5.6" ry="3.75" transform="rotate(-24 921.9 819.7)"/><ellipse cx="945.3" cy="819.7" rx="5.6" ry="3.75" transform="rotate(-24 945.3 819.7)"/><ellipse cx="968.4" cy="787.6" rx="5.6" ry="3.75" transform="rotate(-24 968.4 787.6)"/><ellipse cx="991.9" cy="787.6" rx="5.6" ry="3.75" transform="rotate(-24 991.9 787.6)"/><ellipse cx="991.9" cy="815.7" rx="5.6" ry="3.75" transform="rotate(-24 991.9 815.7)"/><ellipse cx="1015.3" cy="787.6" rx="5.6" ry="3.75" transform="rotate(-24 1015.3 787.6)"/><ellipse cx="1038.7" cy="815.7" rx="5.6" ry="3.75" transform="rotate(-24 1038.7 815.7)"/><ellipse cx="1056.6" cy="787.6" rx="5.6" ry="3.75" transform="rotate(-24 1056.6 787.6)"/><ellipse cx="1056.6" cy="819.7" rx="5.6" ry="3.75" transform="rotate(-24 1056.6 819.7)"/><ellipse cx="1099.8" cy="787.6" rx="5.6" ry="3.75" transform="rotate(-24 1099.8 787.6)"/><ellipse cx="1117.7" cy="815.7" rx="5.6" ry="3.75" transform="rotate(-24 1117.7 815.7)"/><ellipse cx="1140.7" cy="787.6" rx="5.6" ry="3.75" transform="rotate(-24 1140.7 787.6)"/><ellipse cx="1099.8" cy="819.7" rx="5.6" ry="3.75" transform="rotate(-24 1099.8 819.7)"/><ellipse cx="1140.7" cy="815.7" rx="5.6" ry="3.75" transform="rotate(-24 1140.7 815.7)"/><ellipse cx="1159.1" cy="819.7" rx="5.6" ry="3.75" transform="rotate(-24 1159.1 819.7)"/><ellipse cx="1182.2" cy="787.6" rx="5.6" ry="3.75" transform="rotate(-24 1182.2 787.6)"/><ellipse cx="1206.0" cy="815.7" rx="5.6" ry="3.75" transform="rotate(-24 1206.0 815.7)"/><ellipse cx="1229.0" cy="787.6" rx="5.6" ry="3.75" transform="rotate(-24 1229.0 787.6)"/><ellipse cx="1247.0" cy="815.7" rx="5.6" ry="3.75" transform="rotate(-24 1247.0 815.7)"/><ellipse cx="1256.6" cy="819.7" rx="5.6" ry="3.75" transform="rotate(-24 1256.6 819.7)"/><ellipse cx="1278.1" cy="787.6" rx="5.6" ry="3.75" transform="rotate(-24 1278.1 787.6)"/><ellipse cx="1313.4" cy="815.7" rx="5.6" ry="3.75" transform="rotate(-24 1313.4 815.7)"/><ellipse cx="1348.3" cy="787.6" rx="5.6" ry="3.75" transform="rotate(-24 1348.3 787.6)"/><ellipse cx="1371.3" cy="815.7" rx="5.6" ry="3.75" transform="rotate(-24 1371.3 815.7)"/><ellipse cx="1325.3" cy="815.7" rx="5.6" ry="3.75" transform="rotate(-24 1325.3 815.7)"/><ellipse cx="1389.1" cy="787.6" rx="5.6" ry="3.75" transform="rotate(-24 1389.1 787.6)"/><ellipse cx="1412.7" cy="787.6" rx="5.6" ry="3.75" transform="rotate(-24 1412.7 787.6)"/><ellipse cx="1389.1" cy="819.7" rx="5.6" ry="3.75" transform="rotate(-24 1389.1 819.7)"/><ellipse cx="1412.7" cy="815.7" rx="5.6" ry="3.75" transform="rotate(-24 1412.7 815.7)"/><ellipse cx="1430.4" cy="819.7" rx="5.6" ry="3.75" transform="rotate(-24 1430.4 819.7)"/><ellipse cx="1467.5" cy="775.6" rx="5.6" ry="3.75" transform="rotate(-24 1467.5 775.6)"/><ellipse cx="1495.9" cy="815.7" rx="5.6" ry="3.75" transform="rotate(-24 1495.9 815.7)"/><ellipse cx="1514.0" cy="815.7" rx="5.6" ry="3.75" transform="rotate(-24 1514.0 815.7)"/><ellipse cx="1531.6" cy="815.7" rx="5.6" ry="3.75" transform="rotate(-24 1531.6 815.7)"/><ellipse cx="1554.9" cy="735.4" rx="5.6" ry="3.75" transform="rotate(-24 1554.9 735.4)"/><ellipse cx="1578.1" cy="739.4" rx="5.6" ry="3.75" transform="rotate(-24 1578.1 739.4)"/><ellipse cx="1595.4" cy="739.4" rx="5.6" ry="3.75" transform="rotate(-24 1595.4 739.4)"/><ellipse cx="1613.0" cy="723.4" rx="5.6" ry="3.75" transform="rotate(-24 1613.0 723.4)"/><ellipse cx="1613.0" cy="819.7" rx="5.6" ry="3.75" transform="rotate(-24 1613.0 819.7)"/><ellipse cx="1669.5" cy="787.6" rx="5.6" ry="3.75" transform="rotate(-24 1669.5 787.6)"/><ellipse cx="1669.5" cy="815.7" rx="5.6" ry="3.75" transform="rotate(-24 1669.5 815.7)"/><ellipse cx="1708.1" cy="787.6" rx="5.6" ry="3.75" transform="rotate(-24 1708.1 787.6)"/><ellipse cx="1731.3" cy="815.7" rx="5.6" ry="3.75" transform="rotate(-24 1731.3 815.7)"/><ellipse cx="1754.9" cy="787.6" rx="5.6" ry="3.75" transform="rotate(-24 1754.9 787.6)"/><ellipse cx="1778.3" cy="815.7" rx="5.6" ry="3.75" transform="rotate(-24 1778.3 815.7)"/><ellipse cx="1754.9" cy="819.7" rx="5.6" ry="3.75" transform="rotate(-24 1754.9 819.7)"/><ellipse cx="1821.8" cy="787.6" rx="5.6" ry="3.75" transform="rotate(-24 1821.8 787.6)"/><ellipse cx="1839.1" cy="815.7" rx="5.6" ry="3.75" transform="rotate(-24 1839.1 815.7)"/><ellipse cx="1863.2" cy="787.6" rx="5.6" ry="3.75" transform="rotate(-24 1863.2 787.6)"/><ellipse cx="1821.8" cy="819.7" rx="5.6" ry="3.75" transform="rotate(-24 1821.8 819.7)"/><ellipse cx="1863.2" cy="815.7" rx="5.6" ry="3.75" transform="rotate(-24 1863.2 815.7)"/><ellipse cx="1880.9" cy="819.7" rx="5.6" ry="3.75" transform="rotate(-24 1880.9 819.7)"/></g><path d="M362.2 708.7L367.6 716.0Q363.4 720.0 364.2 722.0L367.8 726.4Q362.4 724.4 362.6 727.4Q362.8 729.4 365.0 731.7Q358.8 728.8 360.4 724.8Q361.4 722.8 364.4 723.6L360.6 718.8Q365.6 714.6 362.2 708.7Z" fill="#0a0a0a"/><circle cx="390.7" cy="717.1" r="2.3" fill="#0a0a0a"/><path d="M389.9 718.1Q394.0 720.1 398.1 714.7L393.3 728.9" fill="none" stroke="#0a0a0a" stroke-width="1.15"/><path d="M421.8 696.3C423.8 703.3 436.3 708.3 429.1 722.8C432.3 712.3 426.3 708.3 421.8 705.3Z" fill="#0a0a0a"/><path d="M362.2 792.2L367.6 799.5Q363.4 803.5 364.2 805.5L367.8 809.9Q362.4 807.9 362.6 810.9Q362.8 812.9 365.0 815.2Q358.8 812.3 360.4 808.3Q361.4 806.3 364.4 807.1L360.6 802.3Q365.6 798.1 362.2 792.2Z" fill="#0a0a0a"/><circle cx="390.7" cy="800.5" r="2.3" fill="#0a0a0a"/><path d="M389.9 801.5Q394.0 803.5 398.1 798.1L393.3 812.3" fill="none" stroke="#0a0a0a" stroke-width="1.15"/><path d="M411.7 847.5C413.7 840.2 428.7 837.2 419.8 823.7C423.0 833.7 416.2 835.7 411.7 838.0Z" fill="#0a0a0a"/><path d="M440.8 773.6V792.2" stroke="#0a0a0a" stroke-width="1" fill="none"/><path d="M441.0 792.2Q447.9 788.1 447.0 784.6Q445.4 781.6 441.0 785.4L441.0 787.1Q444.0 784.0 445.0 785.4Q445.6 787.8 441.0 790.8Z" fill="#0a0a0a"/><path d="M464.1 776.1V791.8M468.5 783.4V799.1" stroke="#0a0a0a" stroke-width="1" fill="none"/><path d="M464.1 785.0L468.5 783.2V785.8L464.1 787.6ZM464.1 789.8L468.5 788.0V790.6L464.1 792.4Z" fill="#0a0a0a"/><path d="M459.4 739.8L484.4 739.8V743.5L459.4 743.5Z" fill="#0a0a0a"/><circle cx="452.7" cy="804.5" r="2.3" fill="#0a0a0a"/><path d="M451.9 805.5Q456.0 807.5 460.1 802.1L455.3 816.3" fill="none" stroke="#0a0a0a" stroke-width="1.15"/><path d="M473.1 843.9C475.1 836.6 490.1 833.6 481.2 820.1C484.4 830.1 477.6 832.1 473.1 834.4Z" fill="#0a0a0a"/><path d="M464.5 801.7V820.3" stroke="#0a0a0a" stroke-width="1" fill="none"/><path d="M464.7 820.3Q471.6 816.2 470.7 812.7Q469.1 809.7 464.7 813.5L464.7 815.2Q467.7 812.1 468.7 813.5Q469.3 815.9 464.7 818.9Z" fill="#0a0a0a"/><circle cx="499.7" cy="828.0" r="2.3" fill="#0a0a0a"/><path d="M498.9 829.0Q503.0 831.0 507.1 825.6L502.3 839.8" fill="none" stroke="#0a0a0a" stroke-width="1.15"/><path d="M511.1 804.2V819.9M515.5 811.5V827.2" stroke="#0a0a0a" stroke-width="1" fill="none"/><path d="M511.1 813.1L515.5 811.3V813.9L511.1 815.7ZM511.1 817.9L515.5 816.1V818.7L511.1 820.5Z" fill="#0a0a0a"/><path d="M507.0 739.8L549.0 739.8V743.5L507.0 743.5Z" fill="#0a0a0a"/><path d="M507.0 745.4L531.4 745.4V749.1L507.0 749.1Z" fill="#0a0a0a"/><path d="M537.7 847.5C539.7 840.2 554.7 837.2 545.8 823.7C549.0 833.7 542.2 835.7 537.7 838.0Z" fill="#0a0a0a"/><path d="M613.9 773.6V792.2" stroke="#0a0a0a" stroke-width="1" fill="none"/><path d="M614.1 792.2Q621.0 788.1 620.1 784.6Q618.5 781.6 614.1 785.4L614.1 787.1Q617.1 784.0 618.1 785.4Q618.7 787.8 614.1 790.8Z" fill="#0a0a0a"/><path d="M591.2 739.8L633.8 739.8V743.5L591.2 743.5Z" fill="#0a0a0a"/><path d="M591.2 745.4L610.4 745.4V749.1L591.2 749.1Z" fill="#0a0a0a"/><path d="M613.9 801.7V820.3" stroke="#0a0a0a" stroke-width="1" fill="none"/><path d="M614.1 820.3Q621.0 816.2 620.1 812.7Q618.5 809.7 614.1 813.5L614.1 815.2Q617.1 812.1 618.1 813.5Q618.7 815.9 614.1 818.9Z" fill="#0a0a0a"/><path d="M581.1 843.6L623.6 842.2V845.9L581.1 847.3Z" fill="#0a0a0a"/><path d="M637.0 776.1V791.8M641.4 783.4V799.1" stroke="#0a0a0a" stroke-width="1" fill="none"/><path d="M637.0 785.0L641.4 783.2V785.8L637.0 787.6ZM637.0 789.8L641.4 788.0V790.6L637.0 792.4Z" fill="#0a0a0a"/><path d="M660.6 804.2V819.9M665.0 811.5V827.2" stroke="#0a0a0a" stroke-width="1" fill="none"/><path d="M660.6 813.1L665.0 811.3V813.9L660.6 815.7ZM660.6 817.9L665.0 816.1V818.7L660.6 820.5Z" fill="#0a0a0a"/><path d="M656.1 739.8L716.0 739.8V743.5L656.1 743.5Z" fill="#0a0a0a"/><path d="M656.1 745.4L716.0 745.4V749.1L656.1 749.1Z" fill="#0a0a0a"/><path d="M732.4 739.8L757.0 739.8V743.5L732.4 743.5Z" fill="#0a0a0a"/><path d="M737.1 801.7V820.3" stroke="#0a0a0a" stroke-width="1" fill="none"/><path d="M737.3 820.3Q744.2 816.2 743.3 812.7Q741.7 809.7 737.3 813.5L737.3 815.2Q740.3 812.1 741.3 813.5Q741.9 815.9 737.3 818.9Z" fill="#0a0a0a"/><path d="M722.2 843.6L746.8 842.2V845.9L722.2 847.3Z" fill="#0a0a0a"/><circle cx="771.7" cy="828.0" r="2.3" fill="#0a0a0a"/><path d="M770.9 829.0Q775.0 831.0 779.1 825.6L774.3 839.8" fill="none" stroke="#0a0a0a" stroke-width="1.15"/><path d="M783.5 804.2V819.9M787.9 811.5V827.2" stroke="#0a0a0a" stroke-width="1" fill="none"/><path d="M783.5 813.1L787.9 811.3V813.9L783.5 815.7ZM783.5 817.9L787.9 816.1V818.7L783.5 820.5Z" fill="#0a0a0a"/><path d="M779.1 739.8L844.0 739.8V743.5L779.1 743.5Z" fill="#0a0a0a"/><path d="M779.1 745.4L844.0 745.4V749.1L779.1 749.1Z" fill="#0a0a0a"/><path d="M810.1 847.5C812.1 840.2 827.1 837.2 818.2 823.7C821.4 833.7 814.6 835.7 810.1 838.0Z" fill="#0a0a0a"/><path d="M879.6 739.8L951.4 739.8V743.5L879.6 743.5Z" fill="#0a0a0a"/><path d="M884.3 801.7V820.3" stroke="#0a0a0a" stroke-width="1" fill="none"/><path d="M884.5 820.3Q891.4 816.2 890.5 812.7Q888.9 809.7 884.5 813.5L884.5 815.2Q887.5 812.1 888.5 813.5Q889.1 815.9 884.5 818.9Z" fill="#0a0a0a"/><path d="M869.4 844.0L941.2 844.0V847.7L869.4 847.7Z" fill="#0a0a0a"/><path d="M973.2 739.8L998.0 739.8V743.5L973.2 743.5Z" fill="#0a0a0a"/><circle cx="966.5" cy="804.5" r="2.3" fill="#0a0a0a"/><path d="M965.7 805.5Q969.8 807.5 973.9 802.1L969.1 816.3" fill="none" stroke="#0a0a0a" stroke-width="1.15"/><path d="M986.7 843.9C988.7 836.6 1003.7 833.6 994.8 820.1C998.0 830.1 991.2 832.1 986.7 834.4Z" fill="#0a0a0a"/><circle cx="1012.7" cy="828.0" r="2.3" fill="#0a0a0a"/><path d="M1011.9 829.0Q1016.0 831.0 1020.1 825.6L1015.3 839.8" fill="none" stroke="#0a0a0a" stroke-width="1.15"/><path d="M1024.5 804.2V819.9M1028.9 811.5V827.2" stroke="#0a0a0a" stroke-width="1" fill="none"/><path d="M1024.5 813.1L1028.9 811.3V813.9L1024.5 815.7ZM1024.5 817.9L1028.9 816.1V818.7L1024.5 820.5Z" fill="#0a0a0a"/><path d="M1020.1 739.8L1062.6 739.8V743.5L1020.1 743.5Z" fill="#0a0a0a"/><path d="M1020.1 745.4L1044.8 745.4V749.1L1020.1 749.1Z" fill="#0a0a0a"/><path d="M1051.4 847.5C1053.4 840.2 1068.4 837.2 1059.5 823.7C1062.7 833.7 1055.9 835.7 1051.4 838.0Z" fill="#0a0a0a"/><path d="M1104.7 739.8L1146.8 739.8V743.5L1104.7 743.5Z" fill="#0a0a0a"/><path d="M1104.7 745.4L1123.8 745.4V749.1L1104.7 749.1Z" fill="#0a0a0a"/><path d="M1126.9 801.7V820.3" stroke="#0a0a0a" stroke-width="1" fill="none"/><path d="M1127.1 820.3Q1134.0 816.2 1133.1 812.7Q1131.5 809.7 1127.1 813.5L1127.1 815.2Q1130.1 812.1 1131.1 813.5Q1131.7 815.9 1127.1 818.9Z" fill="#0a0a0a"/><path d="M1094.5 844.0L1155.0 844.0V847.7L1094.5 847.7Z" fill="#0a0a0a"/><path d="M1135.4 838.3L1155.0 838.3V842.0L1135.4 842.0Z" fill="#0a0a0a"/><circle cx="1179.5" cy="828.0" r="2.3" fill="#0a0a0a"/><path d="M1178.7 829.0Q1182.8 831.0 1186.9 825.6L1182.1 839.8" fill="none" stroke="#0a0a0a" stroke-width="1.15"/><circle cx="1190.9" cy="827.2" r="1.2" fill="#0a0a0a"/><path d="M1168.4 773.6V792.2" stroke="#0a0a0a" stroke-width="1" fill="none"/><path d="M1168.6 792.2Q1175.5 788.1 1174.6 784.6Q1173.0 781.6 1168.6 785.4L1168.6 787.1Q1171.6 784.0 1172.6 785.4Q1173.2 787.8 1168.6 790.8Z" fill="#0a0a0a"/><path d="M1191.8 804.2V819.9M1196.2 811.5V827.2" stroke="#0a0a0a" stroke-width="1" fill="none"/><path d="M1191.8 813.1L1196.2 811.3V813.9L1191.8 815.7ZM1191.8 817.9L1196.2 816.1V818.7L1191.8 820.5Z" fill="#0a0a0a"/><path d="M1214.8 776.1V791.8M1219.2 783.4V799.1" stroke="#0a0a0a" stroke-width="1" fill="none"/><path d="M1214.8 785.0L1219.2 783.2V785.8L1214.8 787.6ZM1214.8 789.8L1219.2 788.0V790.6L1214.8 792.4Z" fill="#0a0a0a"/><path d="M1187.1 739.8L1253.0 739.8V743.5L1187.1 743.5Z" fill="#0a0a0a"/><path d="M1187.1 745.4L1253.0 745.4V749.1L1187.1 749.1Z" fill="#0a0a0a"/><path d="M1251.4 847.5C1253.4 840.2 1268.4 837.2 1259.5 823.7C1262.7 833.7 1255.9 835.7 1251.4 838.0Z" fill="#0a0a0a"/><path d="M1251.4 842.0C1253.4 834.7 1268.4 831.7 1259.5 818.2C1262.7 828.2 1255.9 830.2 1251.4 832.5Z" fill="#0a0a0a"/><circle cx="1277.9" cy="827.8" r="2.3" fill="#0a0a0a"/><path d="M1277.1 828.8Q1281.2 830.8 1285.3 825.4L1280.5 839.6" fill="none" stroke="#0a0a0a" stroke-width="1.15"/><circle cx="1275.3" cy="836.2" r="2.1" fill="#0a0a0a"/><path d="M1274.5 837.2Q1278.5 839.0 1282.5 834.2M1280.5 839.6L1278.0 847.6" fill="none" stroke="#0a0a0a" stroke-width="1.15"/><path d="M1299.6 801.7V820.3" stroke="#0a0a0a" stroke-width="1" fill="none"/><path d="M1299.8 820.3Q1306.7 816.2 1305.8 812.7Q1304.2 809.7 1299.8 813.5L1299.8 815.2Q1302.8 812.1 1303.8 813.5Q1304.4 815.9 1299.8 818.9Z" fill="#0a0a0a"/><path d="M1289.2 804.2V819.9M1293.6 811.5V827.2" stroke="#0a0a0a" stroke-width="1" fill="none"/><path d="M1289.2 813.1L1293.6 811.3V813.9L1289.2 815.7ZM1289.2 817.9L1293.6 816.1V818.7L1289.2 820.5Z" fill="#0a0a0a"/><path d="M1357.1 804.2V819.9M1361.5 811.5V827.2" stroke="#0a0a0a" stroke-width="1" fill="none"/><path d="M1357.1 813.1L1361.5 811.3V813.9L1357.1 815.7ZM1357.1 817.9L1361.5 816.1V818.7L1357.1 820.5Z" fill="#0a0a0a"/><path d="M1283.0 739.8L1377.3 739.8V743.5L1283.0 743.5Z" fill="#0a0a0a"/><path d="M1283.0 745.4L1377.3 745.4V749.1L1283.0 749.1Z" fill="#0a0a0a"/><path d="M1320.1 843.9C1322.1 836.6 1337.1 833.6 1328.2 820.1C1331.4 830.1 1324.6 832.1 1320.1 834.4Z" fill="#0a0a0a"/><circle cx="1335.3" cy="814.2" r="1.2" fill="#0a0a0a"/><path d="M1394.0 739.8L1418.8 739.8V743.5L1394.0 743.5Z" fill="#0a0a0a"/><path d="M1398.9 801.7V820.3" stroke="#0a0a0a" stroke-width="1" fill="none"/><path d="M1399.1 820.3Q1406.0 816.2 1405.1 812.7Q1403.5 809.7 1399.1 813.5L1399.1 815.2Q1402.1 812.1 1403.1 813.5Q1403.7 815.9 1399.1 818.9Z" fill="#0a0a0a"/><path d="M1383.8 844.0L1426.3 844.0V847.7L1383.8 847.7Z" fill="#0a0a0a"/><path d="M1407.4 838.3L1426.3 838.3V842.0L1407.4 842.0Z" fill="#0a0a0a"/><circle cx="1464.7" cy="799.5" r="2.3" fill="#0a0a0a"/><path d="M1463.9 800.5Q1468.0 802.5 1472.1 797.1L1467.3 811.3" fill="none" stroke="#0a0a0a" stroke-width="1.15"/><path d="M1482.1 801.7V820.3" stroke="#0a0a0a" stroke-width="1" fill="none"/><path d="M1482.3 820.3Q1489.2 816.2 1488.3 812.7Q1486.7 809.7 1482.3 813.5L1482.3 815.2Q1485.3 812.1 1486.3 813.5Q1486.9 815.9 1482.3 818.9Z" fill="#0a0a0a"/><path d="M1490.6 845.6L1527.5 844.0V847.7L1490.6 849.3Z" fill="#0a0a0a"/><path d="M1490.6 839.9L1527.5 838.3V842.0L1490.6 843.6Z" fill="#0a0a0a"/><path d="M1490.6 834.2L1509.9 833.4V837.1L1490.6 837.9Z" fill="#0a0a0a"/><circle cx="1552.0" cy="799.5" r="2.3" fill="#0a0a0a"/><path d="M1551.2 800.5Q1555.3 802.5 1559.4 797.1L1554.6 811.3" fill="none" stroke="#0a0a0a" stroke-width="1.15"/><path d="M1559.6 703.8L1618.8 696.2V699.5L1559.6 707.1Z" fill="#0a0a0a"/><path d="M1559.6 709.4L1601.2 704.1V707.4L1559.6 712.7Z" fill="#0a0a0a"/><path d="M1583.0 712.0L1601.2 709.7V713.0L1583.0 715.3Z" fill="#0a0a0a"/><path d="M1607.8 847.5C1609.8 840.2 1624.8 837.2 1615.9 823.7C1619.1 833.7 1612.3 835.7 1607.8 838.0Z" fill="#0a0a0a"/><circle cx="1639.2" cy="716.1" r="2.3" fill="#0a0a0a"/><path d="M1638.4 717.1Q1642.5 719.1 1646.6 713.7L1641.8 727.9" fill="none" stroke="#0a0a0a" stroke-width="1.15"/><circle cx="1639.2" cy="799.5" r="2.3" fill="#0a0a0a"/><path d="M1638.4 800.5Q1642.5 802.5 1646.6 797.1L1641.8 811.3" fill="none" stroke="#0a0a0a" stroke-width="1.15"/><path d="M1674.5 739.8C1676.5 746.8 1689.0 751.8 1681.8 766.3C1685.0 755.8 1679.0 751.8 1674.5 748.8Z" fill="#0a0a0a"/><path d="M1664.3 843.9C1666.3 836.6 1681.3 833.6 1672.4 820.1C1675.6 830.1 1668.8 832.1 1664.3 834.4Z" fill="#0a0a0a"/><circle cx="1705.2" cy="804.2" r="2.3" fill="#0a0a0a"/><path d="M1704.4 805.2Q1708.5 807.2 1712.6 801.8L1707.8 816.0" fill="none" stroke="#0a0a0a" stroke-width="1.15"/><path d="M1694.3 773.6V792.2" stroke="#0a0a0a" stroke-width="1" fill="none"/><path d="M1694.5 792.2Q1701.4 788.1 1700.5 784.6Q1698.9 781.6 1694.5 785.4L1694.5 787.1Q1697.5 784.0 1698.5 785.4Q1699.1 787.8 1694.5 790.8Z" fill="#0a0a0a"/><path d="M1717.1 804.2V819.9M1721.5 811.5V827.2" stroke="#0a0a0a" stroke-width="1" fill="none"/><path d="M1717.1 813.1L1721.5 811.3V813.9L1717.1 815.7ZM1717.1 817.9L1721.5 816.1V818.7L1717.1 820.5Z" fill="#0a0a0a"/><path d="M1740.7 776.1V791.8M1745.1 783.4V799.1" stroke="#0a0a0a" stroke-width="1" fill="none"/><path d="M1740.7 785.0L1745.1 783.2V785.8L1740.7 787.6ZM1740.7 789.8L1745.1 788.0V790.6L1740.7 792.4Z" fill="#0a0a0a"/><path d="M1713.0 739.8L1784.3 739.8V743.5L1713.0 743.5Z" fill="#0a0a0a"/><path d="M1713.0 745.4L1784.3 745.4V749.1L1713.0 749.1Z" fill="#0a0a0a"/><path d="M1749.7 847.5C1751.7 840.2 1766.7 837.2 1757.8 823.7C1761.0 833.7 1754.2 835.7 1749.7 838.0Z" fill="#0a0a0a"/><path d="M1849.4 773.6V792.2" stroke="#0a0a0a" stroke-width="1" fill="none"/><path d="M1849.6 792.2Q1856.5 788.1 1855.6 784.6Q1854.0 781.6 1849.6 785.4L1849.6 787.1Q1852.6 784.0 1853.6 785.4Q1854.2 787.8 1849.6 790.8Z" fill="#0a0a0a"/><path d="M1826.7 739.8L1869.2 739.8V743.5L1826.7 743.5Z" fill="#0a0a0a"/><path d="M1826.7 745.4L1845.1 745.4V749.1L1826.7 749.1Z" fill="#0a0a0a"/><path d="M1849.4 801.7V820.3" stroke="#0a0a0a" stroke-width="1" fill="none"/><path d="M1849.6 820.3Q1856.5 816.2 1855.6 812.7Q1854.0 809.7 1849.6 813.5L1849.6 815.2Q1852.6 812.1 1853.6 813.5Q1854.2 815.9 1849.6 818.9Z" fill="#0a0a0a"/><path d="M1816.5 844.0L1876.8 844.0V847.7L1816.5 847.7Z" fill="#0a0a0a"/><path d="M1857.9 838.3L1876.8 838.3V842.0L1857.9 842.0Z" fill="#0a0a0a"/><ellipse cx="268.9" cy="676" rx="4.6" ry="3.1" transform="rotate(-24 268.9 676)" fill="#0a0a0a"/><path d="M273.2 675V662.5" stroke="#0a0a0a" stroke-width=".9"/><ellipse cx="364.7" cy="694.6" rx="4.6" ry="3.1" transform="rotate(-24 364.7 694.6)" fill="#0a0a0a"/><path d="M369.0 693.6V681.1" stroke="#0a0a0a" stroke-width=".9"/></svg></div>
<div style="left:277px;top:668.3px;font-size:12px;color:#0a0a0a;line-height:14px;white-space:nowrap;font-family:'Liberation Serif',serif;font-weight:bold;font-style:italic;line-height:14px;letter-spacing:.4px">= 110</div>
<div style="left:373.3px;top:686.8px;font-size:12px;color:#0a0a0a;line-height:14px;white-space:nowrap;font-family:'Liberation Serif',serif;font-weight:bold;font-style:italic;line-height:14px;letter-spacing:.4px">= 110</div>
<div style="left:244.3px;top:690.5px;font-size:13.5px;color:#1a1a1a;line-height:15.5px;white-space:nowrap;line-height:16px;letter-spacing:.47px">Addicti.. 2 x64</div>
<div style="left:255px;top:720.7px;font-size:26.5px;color:#0a0a0a;line-height:28.5px;white-space:nowrap;font-family:'Liberation Serif',serif;font-weight:bold;line-height:24px">4</div>
<div style="left:255px;top:736.7px;font-size:26.5px;color:#0a0a0a;line-height:28.5px;white-space:nowrap;font-family:'Liberation Serif',serif;font-weight:bold;line-height:24px">4</div>
<div style="left:0px;top:981px;width:1913px;height:42px;background:#373a3f;"></div>
<div style="left:0px;top:979px;width:1913px;height:2px;background:#121315;"></div>
<svg style="left:254px;top:981px;" width="1230" height="42" viewBox="0 0 1230 42"><path d="M0 0H1226L1214 42H10Z" fill="#161719"/></svg>
<svg style="left:272px;top:986px;" width="28" height="15" viewBox="0 0 28 15"><circle cx="14" cy="7.5" r="6.4" fill="none" stroke="#74818c" stroke-width="1.3"/><circle cx="10" cy="7.6" r="1" fill="#74818c"/><circle cx="18" cy="7.6" r="1" fill="#74818c"/><circle cx="11.2" cy="4.6" r="1" fill="#74818c"/><circle cx="16.8" cy="4.6" r="1" fill="#74818c"/><circle cx="14" cy="11" r="1" fill="#74818c"/><circle cx="14" cy="3.4" r="1" fill="#74818c"/><path d="M0.8 4.5L5 8L0.8 11.5ZM24 4.5L28.2 8L24 11.5Z" fill="#4d5b68"/></svg>
<div style="left:266px;top:1004.3px;font-size:10.5px;color:#b4b7bc;line-height:12.5px;white-space:nowrap;width:40px;text-align:center;line-height:12px">MIDI</div>
<div style="left:309.5px;top:987.8px;width:65.3px;height:5px;background:#2c2e33;"></div>
<div style="left:309.5px;top:995.2px;width:65.3px;height:5px;background:#2c2e33;"></div>
<div style="left:370px;top:987.8px;width:4.8px;height:5px;background:#33363b;"></div>
<div style="left:370px;top:995.2px;width:4.8px;height:5px;background:#33363b;"></div>
<div style="left:313px;top:1004.3px;font-size:10.5px;color:#b4b7bc;line-height:12.5px;white-space:nowrap;width:60px;text-align:center;line-height:12px">Výkon</div>
<svg style="left:391px;top:989px;" width="24" height="24" viewBox="0 0 24 24"><circle cx="12" cy="12" r="10" fill="none" stroke="#b0b3b8" stroke-width="2.2" stroke-dasharray="2.2 3.04"/></svg>
<div style="left:428px;top:987px;font-size:13px;color:#e6e7e9;line-height:15px;white-space:nowrap;line-height:16px">44.1 kHz</div>
<div style="left:428px;top:1003px;font-size:12.5px;color:#e6e7e9;line-height:14.5px;white-space:nowrap;line-height:15px">1.5 ms</div>
<div style="left:520px;top:987px;font-size:12.8px;color:#e6e7e9;line-height:14.8px;white-space:nowrap;line-height:16px">00:00:00.000</div>
<div style="left:533.5px;top:1004px;font-size:10.5px;color:#b4b7bc;line-height:12.5px;white-space:nowrap;line-height:13px">Sekundy</div>
<svg style="left:579px;top:1008px;" width="7" height="4.5" viewBox="0 0 7 4.5"><path d="M0 0H7L3.5 4.5Z" fill="#8a8d92"/></svg>
<div style="left:635.5px;top:984px;font-size:19px;color:#eeeff0;line-height:21px;white-space:nowrap;line-height:23px;font-weight:bold;letter-spacing:-.15px">00:00:00.000</div>
<div style="left:667px;top:1005px;font-size:10.5px;color:#b4b7bc;line-height:12.5px;white-space:nowrap;line-height:13px">Sekundy</div>
<svg style="left:712px;top:1009px;" width="7" height="4.5" viewBox="0 0 7 4.5"><path d="M0 0H7L3.5 4.5Z" fill="#8a8d92"/></svg>
<svg style="left:0px;top:0px;" width="1913" height="1023" viewBox="0 0 1913 1023"><g fill="#d0d2d5"><path d="M790.8 994.3V1006.3L779.4 1000.3Z"/><path d="M810.5 994.3V1006.3L800.8 1000.3ZM820.2 994.3V1006.3L810.5 1000.3Z"/><path d="M832 994.3V1006.3L841.5 1000.3ZM841 994.3V1006.3L850.5 1000.3Z"/><path d="M858.7 994.3V1006.3L869.7 1000.3Z"/><path d="M883 994.3H884.6V1006.3H883ZM896.5 994.3V1006.3L885.5 1000.3Z"/><path d="M955.7 990V1012L973.2 1001Z"/><circle cx="996.8" cy="1001" r="10.3"/></g><rect x="916.5" y="990.8" width="20.8" height="20.2" fill="#2eb1dc"/><path d="M1039 1010.5H1033A9.3 9.3 0 0 1 1033 991.5H1044.5A9.3 9.3 0 0 1 1051 1007.5" fill="none" stroke="#8a8d92" stroke-width="2"/><path d="M1033.5 1010.5Q1036.5 1001 1045 1003Q1049 1005 1046 1010.5" fill="none" stroke="#8a8d92" stroke-width="2"/><path d="M1086.5 991.5H1089.5V1008.5H1086.5" fill="none" stroke="#3a7cc4" stroke-width="1.2"/></svg>
<div style="left:1074.5px;top:986.5px;font-size:10.5px;color:#2c5f9a;line-height:12.5px;white-space:nowrap;line-height:13px;font-weight:bold">L</div>
<div style="left:1073.5px;top:1002.5px;font-size:10.5px;color:#3a7cc4;line-height:12.5px;white-space:nowrap;line-height:13px;font-weight:bold">R</div>
<div style="left:1095.5px;top:986px;font-size:12.8px;color:#e6e7e9;line-height:14.8px;white-space:nowrap;line-height:16px">00:00:00.000</div>
<div style="left:1098px;top:1003px;font-size:10.5px;color:#b4b7bc;line-height:12.5px;white-space:nowrap;line-height:13px">Sekundy</div>
<svg style="left:1147.5px;top:1007px;" width="7" height="4.5" viewBox="0 0 7 4.5"><path d="M0 0H7L3.5 4.5Z" fill="#8a8d92"/></svg>
<div style="left:1201px;top:987px;font-size:13px;color:#e6e7e9;line-height:15px;white-space:nowrap;width:40px;text-align:center;line-height:16px">Off</div>
<div style="left:1201px;top:1004.5px;font-size:10.5px;color:#b4b7bc;line-height:12.5px;white-space:nowrap;width:40px;text-align:center;line-height:13px">Sync</div>
<svg style="left:1248px;top:987px;" width="46" height="30" viewBox="0 0 46 30"><path d="M0 4.5H4Q6 4.5 8 7T12 9.5H16" fill="none" stroke="#b0b3b8" stroke-width="1.1"/><path d="M1 8.5H5" stroke="#777a80" stroke-width="1" stroke-dasharray="1 1"/><circle cx="8.5" cy="23" r="3.1" fill="none" stroke="#b0b3b8" stroke-width="2.2"/><circle cx="8.5" cy="23" r="5" fill="none" stroke="#b0b3b8" stroke-width="1.8" stroke-dasharray="1.6 2.33"/><path d="M28.5 1V11" stroke="#b0b3b8" stroke-width="1"/><path d="M30.5 6H33" stroke="#777a80" stroke-width="1" stroke-dasharray="1 1"/><rect x="33.5" y="3.5" width="8.5" height="5" fill="#b0b3b8"/><path d="M33.8 1.5V11" stroke="#b0b3b8" stroke-width="1"/><path d="M25.5 23.5H29M41.5 23.5H45" stroke="#777a80" stroke-width="1" stroke-dasharray="1 1"/><rect x="30.5" y="21" width="10" height="5" fill="#b0b3b8"/><path d="M30.5 18.5V28.5M40.5 18.5V28.5" stroke="#b0b3b8" stroke-width="1.1"/></svg>
<div style="left:1303px;top:987px;font-size:13px;color:#e6e7e9;line-height:15px;white-space:nowrap;width:60px;text-align:center;line-height:16px">110.00</div>
<div style="left:1303px;top:1004.5px;font-size:10.5px;color:#b4b7bc;line-height:12.5px;white-space:nowrap;width:60px;text-align:center;line-height:13px">Tempo</div>
<div style="left:1370px;top:988px;width:66.5px;height:4px;background:#2c2e33;"></div>
<div style="left:1370px;top:993px;width:66.5px;height:4px;background:#2c2e33;"></div>
<div style="left:1438px;top:988px;width:21.5px;height:9px;background:#26282c;"></div>
<svg style="left:1370px;top:1005.2px;" width="70" height="9" viewBox="0 0 70 9"><path d="M0.5 0V9" stroke="#3f8fd6" stroke-width="1" transform="translate(0,0)"/><path d="M0.50 0V9" stroke="#4a9fe0" stroke-width="0.9"/><path d="M2.17 0V9" stroke="#4a9fe0" stroke-width="0.9"/><path d="M3.83 0V9" stroke="#4a9fe0" stroke-width="0.9"/><path d="M5.50 0V9" stroke="#4a9fe0" stroke-width="0.9"/><path d="M7.17 0V9" stroke="#4a9fe0" stroke-width="0.9"/><path d="M8.84 0V9" stroke="#4a9fe0" stroke-width="0.9"/><path d="M10.50 0V9" stroke="#4a9fe0" stroke-width="0.9"/><path d="M12.17 0V9" stroke="#4a9fe0" stroke-width="0.9"/><path d="M13.84 0V9" stroke="#4a9fe0" stroke-width="0.9"/><path d="M15.50 0V9" stroke="#4a9fe0" stroke-width="0.9"/><path d="M17.17 0V9" stroke="#4a9fe0" stroke-width="0.9"/><path d="M18.84 0V9" stroke="#4a9fe0" stroke-width="0.9"/><path d="M20.50 0V9" stroke="#4a9fe0" stroke-width="0.9"/><path d="M22.17 0V9" stroke="#4a9fe0" stroke-width="0.9"/><path d="M23.84 0V9" stroke="#4a9fe0" stroke-width="0.9"/><path d="M25.50 0V9" stroke="#4a9fe0" stroke-width="0.9"/><path d="M27.17 0V9" stroke="#4a9fe0" stroke-width="0.9"/><path d="M28.84 0V9" stroke="#4a9fe0" stroke-width="0.9"/><path d="M30.51 0V9" stroke="#4a9fe0" stroke-width="0.9"/><path d="M32.17 0V9" stroke="#4a9fe0" stroke-width="0.9"/><path d="M33.84 0V9" stroke="#4a9fe0" stroke-width="0.9"/><path d="M35.51 0V9" stroke="#4a9fe0" stroke-width="0.9"/><path d="M37.17 0V9" stroke="#4a9fe0" stroke-width="0.9"/><path d="M38.84 0V9" stroke="#4a9fe0" stroke-width="0.9"/><path d="M40.51 0V9" stroke="#4a9fe0" stroke-width="0.9"/><path d="M42.18 0V9" stroke="#4a9fe0" stroke-width="0.9"/><path d="M43.84 0V9" stroke="#4a9fe0" stroke-width="0.9"/><path d="M45.51 0V9" stroke="#4a9fe0" stroke-width="0.9"/><path d="M47.18 0V9" stroke="#4a9fe0" stroke-width="0.9"/><path d="M48.84 0V9" stroke="#4a9fe0" stroke-width="1.6"/><path d="M50.51 0V9" stroke="#50545a" stroke-width="0.9"/><path d="M52.18 0V9" stroke="#50545a" stroke-width="0.9"/><path d="M53.84 0V9" stroke="#50545a" stroke-width="0.9"/><path d="M55.51 0V9" stroke="#50545a" stroke-width="0.9"/><path d="M57.18 0V9" stroke="#50545a" stroke-width="0.9"/><path d="M58.84 0V9" stroke="#50545a" stroke-width="0.9"/><path d="M60.51 0V9" stroke="#50545a" stroke-width="0.9"/><path d="M62.18 0V9" stroke="#50545a" stroke-width="0.9"/><path d="M63.85 0V9" stroke="#50545a" stroke-width="0.9"/><path d="M65.51 0V9" stroke="#50545a" stroke-width="0.9"/><path d="M67.18 0V9" stroke="#50545a" stroke-width="0.9"/></svg>
<svg style="left:1443.5px;top:1004.5px;" width="17" height="10" viewBox="0 0 17 10"><circle cx="5" cy="5" r="4.6" fill="#41b1e4"/><circle cx="11.5" cy="5" r="3.6" fill="#161719" stroke="#41b1e4" stroke-width="2"/></svg>
<div style="left:1737px;top:981px;width:55px;height:42px;background:#3280d7;"></div>
<div style="left:1737px;top:997px;font-size:13px;color:#fff;line-height:15px;white-space:nowrap;width:55px;text-align:center;line-height:16px">Editor</div>
<div style="left:1792px;top:997px;font-size:13px;color:#e6e7e9;line-height:15px;white-space:nowrap;width:56px;text-align:center;line-height:16px">Mixer</div>
<div style="left:1847.5px;top:981px;width:1px;height:42px;background:#303338;"></div>
<div style="left:1849px;top:997px;font-size:12.5px;color:#e6e7e9;line-height:14.5px;white-space:nowrap;width:64px;text-align:center;line-height:16px">Prohlížeč</div>
</body></html>
